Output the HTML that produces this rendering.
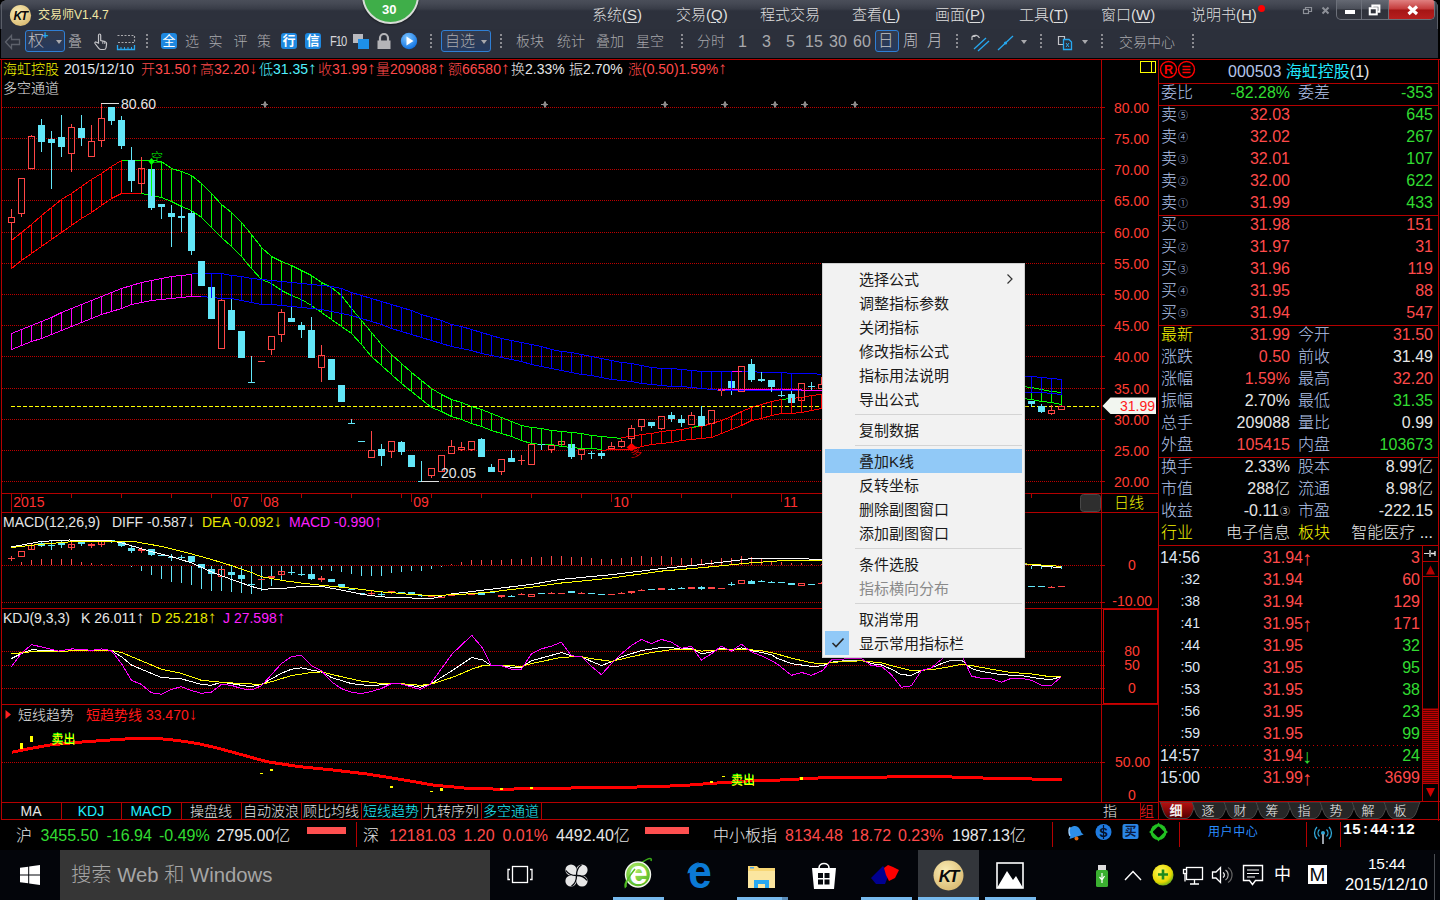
<!DOCTYPE html>
<html lang="zh"><head><meta charset="utf-8"><title>交易师V1.4.7</title>
<style>
*{box-sizing:border-box;margin:0;padding:0}
html,body{width:1440px;height:900px;overflow:hidden;background:#000}
body{position:relative;font-family:"Liberation Sans","Noto Sans CJK SC",sans-serif;font-size:15px;color:#c8c8c8;line-height:1}
.abs{position:absolute}
.t{position:absolute;white-space:nowrap;line-height:1}
.cj{font-weight:300}
#titlebar{position:absolute;left:0;top:0;width:1440px;height:29px;background:linear-gradient(#4a4e59 0,#444853 4px,#383c47 9px,#2d313c 11px,#2d313c 100%)}
#toolbar{position:absolute;left:0;top:29px;width:1440px;height:29px;background:#2c303b}
.menu-t{position:absolute;top:7px;font-size:15px;color:#dedede;white-space:nowrap;font-weight:300}
.menu-t u{text-decoration:underline;text-underline-offset:2px}
.tb{position:absolute;top:2.5px;height:19px;font-size:14px;line-height:19px;color:#a9a9ad;white-space:nowrap;font-weight:300}
.tbsq{position:absolute;top:4px;width:16px;height:16px;border-radius:3px;background:#1e88e0;color:#fff;font-size:13px;line-height:16px;text-align:center;font-weight:400}
.sepd{position:absolute;top:5px;width:2px;height:14px;background:repeating-linear-gradient(#8c8c92 0,#8c8c92 2px,transparent 2px,transparent 4px)}
.ar{font-size:17px;line-height:0}
.red{color:#ff4a4a}.grn{color:#32dc32}.cy{color:#50f0ff}.yl{color:#f8f800}.wh{color:#e6e6e6}.lb{color:#b4c6ec}.mg{color:#ff20ff}
</style></head>
<body>
<div id="titlebar">
<div class="abs" style="left:0;top:0;width:6px;height:6px;background:radial-gradient(circle at 6px 6px,transparent 5.5px,#000 6px)"></div>
<svg class="abs" style="left:9px;top:4px" width="23" height="23" viewBox="0 0 23 23"><defs><radialGradient id="kg" cx="40%" cy="35%" r="70%"><stop offset="0" stop-color="#fbeeb8"/><stop offset="1" stop-color="#d9b970"/></radialGradient></defs><circle cx="11.5" cy="11.5" r="10.6" fill="url(#kg)"/><text x="11" y="16" font-family="Liberation Sans,sans-serif" font-size="12" font-weight="bold" font-style="italic" fill="#0a0a0a" text-anchor="middle" letter-spacing="-1.5">KT</text></svg>
<div class="t cj" style="left:38px;top:9px;font-size:12px;color:#f1e7a4;font-weight:400">交易师V1.4.7</div>
<div class="abs" style="left:362px;top:-33px;width:57px;height:57px;border-radius:50%;background:#3fae49;border:2px solid #d8dcd8;box-shadow:0 1px 2px rgba(0,0,0,.5)"></div>
<div class="t" style="left:382px;top:3px;font-size:13px;font-weight:bold;color:#fff">30</div>
<div class="menu-t" style="left:592px">系统(<u>S</u>)</div>
<div class="menu-t" style="left:676px">交易(<u>Q</u>)</div>
<div class="menu-t" style="left:760px">程式交易</div>
<div class="menu-t" style="left:852px">查看(<u>L</u>)</div>
<div class="menu-t" style="left:935px">画面(<u>P</u>)</div>
<div class="menu-t" style="left:1019px">工具(<u>T</u>)</div>
<div class="menu-t" style="left:1101px">窗口(<u>W</u>)</div>
<div class="menu-t" style="left:1191px">说明书(<u>H</u>)</div>
<div class="abs" style="left:1258px;top:5px;width:7px;height:7px;border-radius:50%;background:#ff0000"></div>
<svg class="abs" style="left:1300px;top:4px" width="34" height="14" viewBox="0 0 34 14"><g fill="none" stroke="#8d9098" stroke-width="1.2"><rect x="3.5" y="5.5" width="5" height="4"/><path d="M5.5 5.5V3.5H11.5V7.5H8.5"/><path d="M22.5 3.5l6 6M28.5 3.5l-6 6" stroke-width="2"/></g></svg>
<div class="abs" style="left:1336px;top:0;width:99px;height:20px;border-radius:0 0 5px 5px;border:1px solid #6c707a;border-top:none;background:linear-gradient(#656973 0,#4b4f59 46%,#2e313a 52%,#32353e 100%);overflow:hidden"><div class="abs" style="left:24px;top:0;width:1px;height:20px;background:#6c707a"></div><div class="abs" style="left:51px;top:0;width:1px;height:20px;background:#6c707a"></div><div class="abs" style="left:52px;top:0;width:45px;height:20px;background:linear-gradient(#e08080 0,#c43a3a 45%,#a51515 50%,#b82020 100%)"></div><div class="abs" style="left:8px;top:10px;width:10px;height:4px;background:#fff"></div><svg class="abs" style="left:30px;top:3px" width="16" height="14" viewBox="0 0 18 16"><g fill="none" stroke="#fff" stroke-width="2.300"><rect x="3" y="6" width="8" height="7"/><path d="M6 5V3H14V10H12"/></g></svg><svg class="abs" style="left:68px;top:3px" width="16" height="14" viewBox="0 0 16 14"><path d="M3.500 3.500l8.500 7.500M12 3.500L3.500 11" stroke="#fff" stroke-width="3.200" fill="none"/></svg></div>
<div class="abs" style="left:1438px;top:0;width:2px;height:59px;background:#000;z-index:5"></div><div class="abs" style="left:1437px;top:3px;width:1px;height:27px;background:#5a5e68"></div><div class="abs" style="left:0;top:29px;width:1px;height:30px;background:#000;z-index:5"></div><div class="abs" style="left:1px;top:4px;width:1px;height:25px;background:#5a5e68"></div>
<div class="abs" style="left:1432px;top:0;width:6px;height:6px;background:radial-gradient(circle at 0 6px,transparent 5.5px,#000 6px)"></div>
</div>
<div id="toolbar">
<svg class="abs" style="left:3px;top:3px" width="18" height="20" viewBox="0 0 18 20"><path d="M2.5 10L8.5 3.5V7.5H16.5V12.5H8.5V16.5Z" fill="none" stroke="#5d616b" stroke-width="1.3"/></svg>
<div class="abs" style="left:25px;top:1px;width:40px;height:22px;border:1px solid #2f7fd6;border-radius:3px;background:linear-gradient(#333a4b,#243a60)"></div>
<div class="tb" style="left:28px;top:1.5px;font-size:16px;color:#bdbdc2">权</div>
<div class="t" style="left:42px;top:1px;font-size:11px;font-weight:bold;color:#27a8f0">+</div>
<div class="abs" style="left:56px;top:11px;border:3px solid transparent;border-top:4px solid #a9a9ad"></div>
<div class="tb" style="left:68px;top:3px;font-size:14px;color:#b9b9be">叠</div>
<svg class="abs" style="left:93px;top:3px" width="16" height="20" viewBox="0 0 16 20"><path d="M5.5 11V3.2c0-1.6 2.2-1.6 2.2 0V8.5l4.5 1.2c1 .3 1.5 1 1.4 2l-.5 3.8c-.2 1.2-1 2-2.2 2H8c-1 0-1.6-.4-2.2-1.200L2 11.500c-.6-1 .5-2 1.500-1.300Z" fill="none" stroke="#c4c4c8" stroke-width="1.2"/><path d="M9.800 9.300v2.500M11.800 9.800v2.200" stroke="#c4c4c8" stroke-width="1"/></svg>
<svg class="abs" style="left:116px;top:5px" width="20" height="18" viewBox="0 0 20 18"><path d="M1.500 1.500H18.500V8.500H1.500" fill="none" stroke="#a9a9ad" stroke-width="1.200" stroke-dasharray="2 1.500"/><path d="M1.500 11V15.500H18.500V11" fill="none" stroke="#27a8f0" stroke-width="1.300"/><path d="M5 13v2M8.500 13v2M12 13v2M15.500 13v2" stroke="#27a8f0" stroke-width="1"/></svg>
<div class="sepd" style="left:146px"></div>
<div class="tbsq" style="left:161px">全</div>
<div class="tb" style="left:185px">选</div>
<div class="tb" style="left:208.5px">实</div>
<div class="tb" style="left:233.5px">评</div>
<div class="tb" style="left:257px">策</div>
<div class="tbsq" style="left:281px;font-weight:700">行</div>
<div class="tbsq" style="left:305px;font-weight:700">信</div>
<div class="tb" style="left:329.5px;font-size:14px;letter-spacing:-1.3px;color:#d6d6da;transform:scaleX(.8);transform-origin:0 0;font-weight:400">F10</div>
<svg class="abs" style="left:352px;top:4px" width="18" height="17" viewBox="0 0 18 17"><rect x="1" y="1" width="10" height="9" fill="#b9b9be"/><rect x="6" y="6" width="11" height="10" fill="#1e90e8"/></svg>
<svg class="abs" style="left:376px;top:2.5px" width="16" height="18" viewBox="0 0 16 18"><path d="M4 9V6a4 4 0 0 1 8 0V9" fill="none" stroke="#b4b4b8" stroke-width="2.200"/><rect x="1.500" y="8.500" width="13" height="8.500" fill="#b4b4b8"/></svg>
<svg class="abs" style="left:400px;top:3px" width="18" height="18" viewBox="0 0 18 18"><defs><radialGradient id="pg" cx="40%" cy="30%" r="75%"><stop offset="0" stop-color="#7cc4ff"/><stop offset="1" stop-color="#0c6fe0"/></radialGradient></defs><circle cx="9" cy="9" r="8.200" fill="url(#pg)"/><path d="M6.500 4.500L13.500 9L6.500 13.500Z" fill="#fff"/></svg>
<div class="sepd" style="left:430px"></div>
<div class="abs" style="left:441px;top:1px;width:50px;height:22px;border:1px solid #2f7fd6;border-radius:3px;background:linear-gradient(#333a4b,#243a60)"></div>
<div class="tb" style="left:445px;top:2px;font-size:15px">自选</div>
<div class="abs" style="left:481px;top:11px;border:3px solid transparent;border-top:4px solid #a9a9ad"></div>
<div class="sepd" style="left:500px"></div>
<div class="tb" style="left:516px">板块</div>
<div class="tb" style="left:557px">统计</div>
<div class="tb" style="left:596px">叠加</div>
<div class="tb" style="left:636px">星空</div>
<div class="sepd" style="left:681px"></div>
<div class="tb" style="left:697px">分时</div>
<div class="tb" style="left:738px;font-size:16px">1</div>
<div class="tb" style="left:762px;font-size:16px">3</div>
<div class="tb" style="left:786px;font-size:16px">5</div>
<div class="tb" style="left:805px;font-size:16px">15</div>
<div class="tb" style="left:829px;font-size:16px">30</div>
<div class="tb" style="left:853px;font-size:16px">60</div>
<div class="abs" style="left:875px;top:1px;width:24px;height:22px;border:1px solid #2f7fd6;border-radius:3px;background:linear-gradient(#333a4b,#243a60)"></div>
<div class="tb" style="left:878px;top:2px;font-size:15.500px;color:#c4c4c8">日</div>
<div class="tb" style="left:903px;top:2px;font-size:15.500px;color:#c4c4c8">周</div>
<div class="tb" style="left:927px;top:2px;font-size:15.500px;color:#c4c4c8">月</div>
<div class="sepd" style="left:956px"></div>
<svg class="abs" style="left:969px;top:4px" width="24" height="20" viewBox="0 0 24 20"><path d="M3 3.500C6 1.500 9 2 10.500 5M3 3.500V7M3 3.500H6.500" fill="none" stroke="#c4c4c8" stroke-width="1.200"/><path d="M5 16L17 5" stroke="#27a8f0" stroke-width="1.300"/><path d="M9 18L20 8" stroke="#27a8f0" stroke-width="1.300"/></svg>
<svg class="abs" style="left:996px;top:5px" width="20" height="18" viewBox="0 0 20 18"><path d="M2 16L17 2" stroke="#27a8f0" stroke-width="1.300"/><circle cx="9.500" cy="9" r="1.600" fill="#27a8f0"/></svg>
<div class="abs" style="left:1021px;top:11px;border:3px solid transparent;border-top:4px solid #a9a9ad"></div>
<div class="sepd" style="left:1040px"></div>
<svg class="abs" style="left:1056px;top:5px" width="20" height="18" viewBox="0 0 20 18"><path d="M2.500 2.500H8.500V10.500H2.500Z" fill="none" stroke="#c4c4c8" stroke-width="1.200"/><path d="M7.500 5.500H13L15.500 8V15.500H7.500Z" fill="#2c303b" stroke="#27a8f0" stroke-width="1.300"/><path d="M10 9l3 4M13 9l-3 4" stroke="#27a8f0" stroke-width="1"/></svg>
<div class="abs" style="left:1082px;top:11px;border:3px solid transparent;border-top:4px solid #a9a9ad"></div>
<div class="sepd" style="left:1101px"></div>
<div class="tb" style="left:1119px;top:4px;font-size:14px">交易中心</div>
<div class="sepd" style="left:1192px"></div>
</div>
<svg class="abs" style="left:0;top:0" width="1160" height="822" viewBox="0 0 1160 822" shape-rendering="crispEdges" font-family="Liberation Sans, Noto Sans CJK SC, sans-serif" font-size="14">
<g fill="#b40000">
<rect x="0" y="59" width="1440" height="1"/>
<rect x="1" y="59" width="1" height="761"/>
<rect x="1101" y="59" width="1" height="744"/>
<rect x="1158" y="59" width="1" height="761"/>
<rect x="1" y="493" width="1158" height="1"/>
<rect x="1" y="512" width="1158" height="1"/>
<rect x="1" y="608" width="1158" height="1"/>
<rect x="1" y="704" width="1158" height="1"/>
<rect x="1" y="802" width="1158" height="1"/>
<rect x="1" y="819" width="1158" height="1"/>
</g>
<g stroke="#bc0000" stroke-width="1" stroke-dasharray="1 1">
<line x1="2" y1="107.5" x2="1101" y2="107.5"/>
<line x1="2" y1="138.5" x2="1101" y2="138.5"/>
<line x1="2" y1="169.5" x2="1101" y2="169.5"/>
<line x1="2" y1="200.5" x2="1101" y2="200.5"/>
<line x1="2" y1="232.5" x2="1101" y2="232.5"/>
<line x1="2" y1="263.5" x2="1101" y2="263.5"/>
<line x1="2" y1="294.5" x2="1101" y2="294.5"/>
<line x1="2" y1="325.5" x2="1101" y2="325.5"/>
<line x1="2" y1="356.5" x2="1101" y2="356.5"/>
<line x1="2" y1="388.5" x2="1101" y2="388.5"/>
<line x1="2" y1="419.5" x2="1101" y2="419.5"/>
<line x1="2" y1="450.5" x2="1101" y2="450.5"/>
<line x1="2" y1="481.5" x2="1101" y2="481.5"/>
</g>
<g fill="#b40000">
<rect x="1102" y="107" width="3" height="1"/>
<rect x="1102" y="138" width="3" height="1"/>
<rect x="1102" y="169" width="3" height="1"/>
<rect x="1102" y="200" width="3" height="1"/>
<rect x="1102" y="232" width="3" height="1"/>
<rect x="1102" y="263" width="3" height="1"/>
<rect x="1102" y="294" width="3" height="1"/>
<rect x="1102" y="325" width="3" height="1"/>
<rect x="1102" y="356" width="3" height="1"/>
<rect x="1102" y="388" width="3" height="1"/>
<rect x="1102" y="419" width="3" height="1"/>
<rect x="1102" y="450" width="3" height="1"/>
<rect x="1102" y="481" width="3" height="1"/>
</g>
<g fill="#ff3c32" text-anchor="end" shape-rendering="auto">
<text x="1149" y="112.5">80.00</text>
<text x="1149" y="143.5">75.00</text>
<text x="1149" y="174.5">70.00</text>
<text x="1149" y="205.5">65.00</text>
<text x="1149" y="237.5">60.00</text>
<text x="1149" y="268.5">55.00</text>
<text x="1149" y="299.5">50.00</text>
<text x="1149" y="330.5">45.00</text>
<text x="1149" y="361.5">40.00</text>
<text x="1149" y="393.5">35.00</text>
<text x="1149" y="424.5">30.00</text>
<text x="1149" y="455.5">25.00</text>
<text x="1149" y="486.5">20.00</text>
</g>
<g stroke-width="1">
<polyline points="11.5,240.5 21.5,232.5 31.5,224.5 41.5,215.5 51.5,207.5 61.5,199.5 71.5,193.5 81.5,186.5 91.5,179.5 101.5,173.5 111.5,166.5 121.5,160.5" fill="none" stroke="#ff0000"/><polyline points="11.5,268.5 21.5,260.5 31.5,253.5 41.5,246.5 51.5,239.5 61.5,232.5 71.5,225.5 81.5,218.5 91.5,212.5 101.5,205.5 111.5,198.5 121.5,193.5" fill="none" stroke="#ff0000"/>
<polyline points="121.5,193.5 141.5,193.5" fill="none" stroke="#ff0000"/><rect x="141" y="160" width="1" height="34" fill="#ff0000"/>
<polyline points="121.5,160.5 131.5,160.5 141.5,160.5 151.5,160.5 161.5,161.5 171.5,168.5 181.5,171.5 191.5,175.5 201.5,183.5 211.5,193.5 221.5,204.5 231.5,212.5 241.5,222.5 251.5,234.5 261.5,247.5 271.5,256.5 281.5,261.5 291.5,265.5 301.5,270.5 311.5,275.5 321.5,282.5 331.5,287.5 341.5,295.5 351.5,308.5 361.5,320.5 371.5,332.5 381.5,344.5 391.5,354.5 401.5,363.5 411.5,372.5 421.5,380.5 431.5,388.5 441.5,394.5 451.5,399.5 461.5,402.5 471.5,406.5 481.5,409.5 491.5,413.5 501.5,417.5 511.5,421.5 521.5,425.5 531.5,427.5 541.5,428.5 551.5,430.5 561.5,431.5 571.5,432.5 581.5,433.5 591.5,435.5 601.5,436.5 611.5,437.5 621.5,438.5" fill="none" stroke="#00ff00"/><polyline points="141.5,193.5 151.5,195.5 161.5,197.5 171.5,201.5 181.5,206.5 191.5,210.5 201.5,217.5 211.5,227.5 221.5,237.5 231.5,246.5 241.5,256.5 251.5,268.5 261.5,279.5 271.5,283.5 281.5,290.5 291.5,295.5 301.5,299.5 311.5,305.5 321.5,312.5 331.5,319.5 341.5,326.5 351.5,333.5 361.5,344.5 371.5,356.5 381.5,365.5 391.5,374.5 401.5,383.5 411.5,391.5 421.5,399.5 431.5,407.5 441.5,411.5 451.5,416.5 461.5,419.5 471.5,423.5 481.5,426.5 491.5,430.5 501.5,433.5 511.5,436.5 521.5,440.5 531.5,443.5 541.5,444.5 551.5,444.5 561.5,446.5 571.5,447.5 581.5,448.5 591.5,448.5 601.5,449.5" fill="none" stroke="#00ff00"/>
<polyline points="1021.5,386.5 1031.5,387.5 1041.5,389.5 1051.5,391.5 1061.5,392.5" fill="none" stroke="#00ff00"/><polyline points="1021.5,398.5 1031.5,399.5 1041.5,401.5 1051.5,402.5 1061.5,404.5" fill="none" stroke="#00ff00"/>
<polyline points="11.5,333.5 21.5,329.5 31.5,325.5 41.5,321.5 51.5,317.5 61.5,312.5 71.5,308.5 81.5,304.5 91.5,300.5 101.5,296.5 111.5,292.5 121.5,288.5 131.5,285.5 141.5,282.5 151.5,280.5 161.5,278.5 171.5,276.5 181.5,275.5 191.5,274.5" fill="none" stroke="#ff00ff"/><polyline points="11.5,349.5 21.5,345.5 31.5,341.5 41.5,338.5 51.5,334.5 61.5,330.5 71.5,326.5 81.5,322.5 91.5,318.5 101.5,314.5 111.5,311.5 121.5,308.5 131.5,304.5 141.5,302.5 151.5,300.5 161.5,299.5 171.5,298.5 181.5,297.5 191.5,296.5" fill="none" stroke="#ff00ff"/>
<polyline points="191.5,296.5 201.5,296.5" fill="none" stroke="#ff00ff"/>
<polyline points="191.5,273.5 201.5,273.5 211.5,273.5 221.5,273.5 231.5,275.5 241.5,276.5 251.5,278.5 261.5,279.5 271.5,280.5 281.5,281.5 291.5,282.5 301.5,283.5 311.5,284.5 321.5,285.5 331.5,286.5 341.5,288.5 351.5,292.5 361.5,295.5 371.5,298.5 381.5,301.5 391.5,304.5 401.5,307.5 411.5,310.5 421.5,314.5 431.5,317.5 441.5,320.5 451.5,324.5 461.5,326.5 471.5,329.5 481.5,332.5 491.5,335.5 501.5,338.5 511.5,340.5 521.5,342.5 531.5,344.5 541.5,346.5 551.5,349.5 561.5,351.5 571.5,352.5 581.5,354.5 591.5,356.5 601.5,358.5 611.5,360.5 621.5,362.5 631.5,363.5 641.5,365.5 651.5,367.5 661.5,368.5 671.5,368.5 681.5,369.5 691.5,370.5 701.5,371.5 711.5,371.5 721.5,371.5 731.5,371.5 741.5,371.5 751.5,371.5 761.5,372.5 771.5,372.5 781.5,372.5 791.5,373.5 801.5,373.5 811.5,373.5 821.5,374.5" fill="none" stroke="#0000ff"/><polyline points="201.5,296.5 211.5,297.5 221.5,298.5 231.5,298.5 241.5,300.5 251.5,302.5 261.5,304.5 271.5,304.5 281.5,305.5 291.5,306.5 301.5,307.5 311.5,308.5 321.5,309.5 331.5,311.5 341.5,313.5 351.5,315.5 361.5,318.5 371.5,321.5 381.5,324.5 391.5,328.5 401.5,331.5 411.5,334.5 421.5,337.5 431.5,340.5 441.5,343.5 451.5,346.5 461.5,348.5 471.5,350.5 481.5,353.5 491.5,355.5 501.5,357.5 511.5,359.5 521.5,361.5 531.5,364.5 541.5,366.5 551.5,368.5 561.5,370.5 571.5,372.5 581.5,374.5 591.5,375.5 601.5,377.5 611.5,379.5 621.5,380.5 631.5,381.5 641.5,383.5 651.5,384.5 661.5,385.5 671.5,386.5 681.5,386.5 691.5,387.5 701.5,388.5 711.5,389.5 721.5,390.5 731.5,390.5 741.5,390.5 751.5,390.5 761.5,390.5 771.5,390.5 781.5,390.5 791.5,390.5 801.5,390.5 811.5,390.5 821.5,390.5" fill="none" stroke="#0000ff"/>
<polyline points="1021.5,376.5 1031.5,376.5 1041.5,377.5 1051.5,378.5 1061.5,379.5" fill="none" stroke="#0000ff"/><polyline points="1021.5,392.5 1031.5,392.5 1041.5,392.5 1051.5,393.5 1061.5,394.5" fill="none" stroke="#0000ff"/>
<polyline points="621.5,437.5 631.5,436.5 641.5,434.5 651.5,433.5 661.5,431.5 671.5,430.5 681.5,429.5 691.5,427.5 701.5,426.5 711.5,423.5 721.5,420.5 731.5,416.5 741.5,411.5 751.5,407.5 761.5,404.5 771.5,401.5 781.5,399.5 791.5,398.5 801.5,397.5 811.5,395.5 821.5,394.5" fill="none" stroke="#ff0000"/><polyline points="601.5,450.5 611.5,449.5 621.5,449.5 631.5,449.5 641.5,446.5 651.5,444.5 661.5,443.5 671.5,442.5 681.5,440.5 691.5,439.5 701.5,438.5 711.5,437.5 721.5,433.5 731.5,429.5 741.5,425.5 751.5,420.5 761.5,418.5 771.5,415.5 781.5,413.5 791.5,413.5 801.5,412.5 811.5,410.5 821.5,408.5" fill="none" stroke="#ff0000"/>
<polyline points="731.5,371.5 741.5,371.5" fill="none" stroke="#ff00ff"/><polyline points="718,389.5 801.5,389.5 802,390.5 822,390.5" fill="none" stroke="#ff00ff"/><rect x="744" y="372" width="1" height="18" fill="#ff00ff"/>
<polyline points="691.5,427.5 701.5,425.500" fill="none" stroke="#00ff00"/><polyline points="781.5,399.5 791.5,398.500" fill="none" stroke="#00ff00"/>
</g>
<line x1="11" y1="406.5" x2="1099" y2="406.5" stroke="#ffff00" stroke-width="1" stroke-dasharray="4 2"/>
<g>
<rect x="8.5" y="217.5" width="6" height="5" fill="none" stroke="#ff4646" stroke-width="1"/><rect x="11" y="209" width="1" height="8" fill="#ff4646"/><rect x="11" y="223" width="1" height="17" fill="#ff4646"/>
<rect x="18.5" y="178.5" width="6" height="35" fill="none" stroke="#ff4646" stroke-width="1"/><rect x="21" y="214" width="1" height="3" fill="#ff4646"/>
<rect x="28.5" y="136.5" width="6" height="32" fill="none" stroke="#ff4646" stroke-width="1"/><rect x="31" y="135" width="1" height="1" fill="#ff4646"/>
<rect x="38" y="125" width="7" height="17" fill="#62e6f8"/><rect x="41" y="119" width="1" height="6" fill="#62e6f8"/><rect x="41" y="142" width="1" height="10" fill="#62e6f8"/>
<rect x="48" y="139" width="7" height="4" fill="#62e6f8"/><rect x="51" y="131" width="1" height="8" fill="#62e6f8"/><rect x="51" y="143" width="1" height="46" fill="#62e6f8"/>
<rect x="58" y="137" width="7" height="10" fill="#62e6f8"/><rect x="61" y="115" width="1" height="22" fill="#62e6f8"/><rect x="61" y="147" width="1" height="10" fill="#62e6f8"/>
<rect x="68.5" y="127.5" width="6" height="26" fill="none" stroke="#ff4646" stroke-width="1"/><rect x="71" y="124" width="1" height="3" fill="#ff4646"/><rect x="71" y="154" width="1" height="18" fill="#ff4646"/>
<rect x="78" y="128" width="7" height="10" fill="#62e6f8"/><rect x="81" y="115" width="1" height="13" fill="#62e6f8"/><rect x="81" y="138" width="1" height="8" fill="#62e6f8"/>
<rect x="88.5" y="141.5" width="6" height="15" fill="none" stroke="#ff4646" stroke-width="1"/><rect x="91" y="125" width="1" height="16" fill="#ff4646"/>
<rect x="98.5" y="118.5" width="6" height="22" fill="none" stroke="#ff4646" stroke-width="1"/><rect x="101" y="103" width="1" height="15" fill="#ff4646"/><rect x="101" y="141" width="1" height="6" fill="#ff4646"/>
<rect x="108" y="107" width="7" height="14" fill="#62e6f8"/><rect x="111" y="121" width="1" height="4" fill="#62e6f8"/>
<rect x="118" y="120" width="7" height="26" fill="#62e6f8"/><rect x="121" y="116" width="1" height="4" fill="#62e6f8"/><rect x="121" y="146" width="1" height="3" fill="#62e6f8"/>
<rect x="128" y="160" width="7" height="21" fill="#62e6f8"/><rect x="131" y="147" width="1" height="13" fill="#62e6f8"/><rect x="131" y="181" width="1" height="11" fill="#62e6f8"/>
<rect x="138.5" y="168.5" width="6" height="15" fill="none" stroke="#ff4646" stroke-width="1"/><rect x="141" y="157" width="1" height="11" fill="#ff4646"/><rect x="141" y="184" width="1" height="9" fill="#ff4646"/>
<rect x="148" y="169" width="7" height="39" fill="#62e6f8"/><rect x="151" y="165" width="1" height="4" fill="#62e6f8"/><rect x="151" y="208" width="1" height="2" fill="#62e6f8"/>
<rect x="158" y="204" width="7" height="3" fill="#62e6f8"/><rect x="161" y="207" width="1" height="12" fill="#62e6f8"/>
<rect x="168" y="213" width="7" height="4" fill="#62e6f8"/><rect x="171" y="205" width="1" height="8" fill="#62e6f8"/><rect x="171" y="217" width="1" height="30" fill="#62e6f8"/>
<rect x="178" y="216" width="7" height="2" fill="#62e6f8"/><rect x="181" y="205" width="1" height="11" fill="#62e6f8"/><rect x="181" y="218" width="1" height="14" fill="#62e6f8"/>
<rect x="188" y="213" width="7" height="38" fill="#62e6f8"/><rect x="191" y="211" width="1" height="2" fill="#62e6f8"/><rect x="191" y="251" width="1" height="4" fill="#62e6f8"/>
<rect x="198" y="261" width="7" height="25" fill="#62e6f8"/>
<rect x="208" y="287" width="7" height="32" fill="#62e6f8"/>
<rect x="218.5" y="300.5" width="6" height="48" fill="none" stroke="#ff4646" stroke-width="1"/><rect x="221" y="297" width="1" height="3" fill="#ff4646"/>
<rect x="228" y="310" width="7" height="20" fill="#62e6f8"/><rect x="231" y="298" width="1" height="12" fill="#62e6f8"/>
<rect x="238" y="331" width="7" height="27" fill="#62e6f8"/>
<rect x="248" y="382" width="7" height="1" fill="#62e6f8"/><rect x="251" y="356" width="1" height="27" fill="#62e6f8"/>
<rect x="258" y="361" width="7" height="1" fill="#ff4646"/>
<rect x="268.5" y="336.5" width="6" height="13" fill="none" stroke="#ff4646" stroke-width="1"/><rect x="271" y="350" width="1" height="5" fill="#ff4646"/>
<rect x="278.5" y="312.5" width="6" height="22" fill="none" stroke="#ff4646" stroke-width="1"/><rect x="281" y="309" width="1" height="3" fill="#ff4646"/><rect x="281" y="335" width="1" height="7" fill="#ff4646"/>
<rect x="288" y="318" width="7" height="4" fill="#62e6f8"/><rect x="291" y="305" width="1" height="13" fill="#62e6f8"/>
<rect x="298" y="325" width="7" height="5" fill="#62e6f8"/><rect x="301" y="322" width="1" height="3" fill="#62e6f8"/><rect x="301" y="330" width="1" height="8" fill="#62e6f8"/>
<rect x="308" y="330" width="7" height="28" fill="#62e6f8"/><rect x="311" y="317" width="1" height="13" fill="#62e6f8"/>
<rect x="318.5" y="355.5" width="6" height="12" fill="none" stroke="#ff4646" stroke-width="1"/><rect x="321" y="345" width="1" height="10" fill="#ff4646"/><rect x="321" y="368" width="1" height="14" fill="#ff4646"/>
<rect x="328" y="359" width="7" height="21" fill="#62e6f8"/>
<rect x="338" y="385" width="7" height="17" fill="#62e6f8"/>
<rect x="348" y="423" width="7" height="1" fill="#62e6f8"/><rect x="351" y="419" width="1" height="5" fill="#62e6f8"/>
<rect x="358" y="441" width="7" height="1" fill="#62e6f8"/>
<rect x="368.5" y="450.5" width="6" height="7" fill="none" stroke="#ff4646" stroke-width="1"/><rect x="371" y="431" width="1" height="19" fill="#ff4646"/>
<rect x="378" y="449" width="7" height="7" fill="#62e6f8"/><rect x="381" y="444" width="1" height="5" fill="#62e6f8"/><rect x="381" y="456" width="1" height="10" fill="#62e6f8"/>
<rect x="388.5" y="441.5" width="6" height="10" fill="none" stroke="#ff4646" stroke-width="1"/><rect x="391" y="452" width="1" height="6" fill="#ff4646"/>
<rect x="398" y="442" width="7" height="10" fill="#62e6f8"/><rect x="401" y="441" width="1" height="1" fill="#62e6f8"/><rect x="401" y="452" width="1" height="3" fill="#62e6f8"/>
<rect x="408" y="455" width="7" height="12" fill="#62e6f8"/>
<rect x="418" y="481" width="7" height="1" fill="#62e6f8"/><rect x="421" y="461" width="1" height="21" fill="#62e6f8"/>
<rect x="428.5" y="468.5" width="6" height="7" fill="none" stroke="#ff4646" stroke-width="1"/><rect x="431" y="476" width="1" height="2" fill="#ff4646"/>
<rect x="438.5" y="455.5" width="6" height="16" fill="none" stroke="#ff4646" stroke-width="1"/>
<rect x="448.5" y="446.5" width="6" height="7" fill="none" stroke="#ff4646" stroke-width="1"/><rect x="451" y="440" width="1" height="6" fill="#ff4646"/>
<rect x="458.5" y="447.5" width="6" height="2" fill="none" stroke="#ff4646" stroke-width="1"/><rect x="461" y="442" width="1" height="5" fill="#ff4646"/><rect x="461" y="450" width="1" height="1" fill="#ff4646"/>
<rect x="468.5" y="441.5" width="6" height="8" fill="none" stroke="#ff4646" stroke-width="1"/><rect x="471" y="450" width="1" height="1" fill="#ff4646"/>
<rect x="478" y="439" width="7" height="18" fill="#62e6f8"/><rect x="481" y="438" width="1" height="1" fill="#62e6f8"/>
<rect x="488" y="467" width="7" height="5" fill="#62e6f8"/><rect x="491" y="464" width="1" height="3" fill="#62e6f8"/>
<rect x="498.5" y="459.5" width="6" height="12" fill="none" stroke="#ff4646" stroke-width="1"/><rect x="501" y="472" width="1" height="3" fill="#ff4646"/>
<rect x="508" y="458" width="7" height="4" fill="#62e6f8"/><rect x="511" y="450" width="1" height="8" fill="#62e6f8"/>
<rect x="518" y="460" width="7" height="1" fill="#ff4646"/><rect x="521" y="455" width="1" height="10" fill="#ff4646"/>
<rect x="528.5" y="444.5" width="6" height="20" fill="none" stroke="#ff4646" stroke-width="1"/>
<rect x="538" y="444" width="7" height="1" fill="#62e6f8"/><rect x="541" y="444" width="1" height="6" fill="#62e6f8"/>
<rect x="548.5" y="445.5" width="6" height="4" fill="none" stroke="#ff4646" stroke-width="1"/><rect x="551" y="443" width="1" height="2" fill="#ff4646"/><rect x="551" y="450" width="1" height="3" fill="#ff4646"/>
<rect x="558.5" y="441.5" width="6" height="3" fill="none" stroke="#ff4646" stroke-width="1"/><rect x="561" y="438" width="1" height="3" fill="#ff4646"/><rect x="561" y="445" width="1" height="1" fill="#ff4646"/>
<rect x="568" y="444" width="7" height="13" fill="#62e6f8"/><rect x="571" y="457" width="1" height="2" fill="#62e6f8"/>
<rect x="578.5" y="449.5" width="6" height="5" fill="none" stroke="#ff4646" stroke-width="1"/><rect x="581" y="447" width="1" height="2" fill="#ff4646"/><rect x="581" y="455" width="1" height="5" fill="#ff4646"/>
<rect x="588" y="453" width="7" height="1" fill="#62e6f8"/><rect x="591" y="451" width="1" height="8" fill="#62e6f8"/>
<rect x="598" y="453" width="7" height="3" fill="#62e6f8"/><rect x="601" y="451" width="1" height="2" fill="#62e6f8"/><rect x="601" y="456" width="1" height="3" fill="#62e6f8"/>
<rect x="608.5" y="446.5" width="6" height="2" fill="none" stroke="#ff4646" stroke-width="1"/><rect x="611" y="442" width="1" height="4" fill="#ff4646"/>
<rect x="618.5" y="441.5" width="6" height="5" fill="none" stroke="#ff4646" stroke-width="1"/><rect x="621" y="439" width="1" height="2" fill="#ff4646"/><rect x="621" y="447" width="1" height="1" fill="#ff4646"/>
<rect x="628.5" y="428.5" width="6" height="10" fill="none" stroke="#ff4646" stroke-width="1"/><rect x="631" y="425" width="1" height="3" fill="#ff4646"/><rect x="631" y="439" width="1" height="6" fill="#ff4646"/>
<rect x="638.5" y="419.5" width="6" height="7" fill="none" stroke="#ff4646" stroke-width="1"/><rect x="641" y="427" width="1" height="4" fill="#ff4646"/>
<rect x="648" y="422" width="7" height="4" fill="#62e6f8"/><rect x="651" y="426" width="1" height="2" fill="#62e6f8"/>
<rect x="658.5" y="416.5" width="6" height="12" fill="none" stroke="#ff4646" stroke-width="1"/><rect x="661" y="429" width="1" height="1" fill="#ff4646"/>
<rect x="668" y="415" width="7" height="4" fill="#62e6f8"/><rect x="671" y="412" width="1" height="3" fill="#62e6f8"/><rect x="671" y="419" width="1" height="3" fill="#62e6f8"/>
<rect x="678" y="419" width="7" height="4" fill="#62e6f8"/><rect x="681" y="415" width="1" height="4" fill="#62e6f8"/><rect x="681" y="423" width="1" height="4" fill="#62e6f8"/>
<rect x="688.5" y="415.5" width="6" height="9" fill="none" stroke="#ff4646" stroke-width="1"/><rect x="691" y="412" width="1" height="3" fill="#ff4646"/>
<rect x="698" y="416" width="7" height="10" fill="#62e6f8"/><rect x="701" y="406" width="1" height="10" fill="#62e6f8"/><rect x="701" y="426" width="1" height="4" fill="#62e6f8"/>
<rect x="708.5" y="410.5" width="6" height="13" fill="none" stroke="#ff4646" stroke-width="1"/>
<rect x="718" y="390" width="7" height="1" fill="#ff4646"/><rect x="721" y="390" width="1" height="6" fill="#ff4646"/>
<rect x="728" y="381" width="7" height="7" fill="#62e6f8"/><rect x="731" y="371" width="1" height="10" fill="#62e6f8"/><rect x="731" y="388" width="1" height="7" fill="#62e6f8"/>
<rect x="738.5" y="366.5" width="6" height="25" fill="none" stroke="#ff4646" stroke-width="1"/>
<rect x="748" y="364" width="7" height="16" fill="#62e6f8"/><rect x="751" y="359" width="1" height="5" fill="#62e6f8"/><rect x="751" y="380" width="1" height="2" fill="#62e6f8"/>
<rect x="758" y="379" width="7" height="2" fill="#62e6f8"/><rect x="761" y="372" width="1" height="7" fill="#62e6f8"/><rect x="761" y="381" width="1" height="1" fill="#62e6f8"/>
<rect x="768" y="380" width="7" height="7" fill="#62e6f8"/><rect x="771" y="387" width="1" height="5" fill="#62e6f8"/>
<rect x="778" y="395" width="7" height="1" fill="#62e6f8"/><rect x="781" y="389" width="1" height="8" fill="#62e6f8"/>
<rect x="788" y="394" width="7" height="9" fill="#62e6f8"/><rect x="791" y="391" width="1" height="3" fill="#62e6f8"/><rect x="791" y="403" width="1" height="3" fill="#62e6f8"/>
<rect x="798.5" y="383.5" width="6" height="17" fill="none" stroke="#ff4646" stroke-width="1"/>
<rect x="808" y="386" width="7" height="1" fill="#62e6f8"/><rect x="811" y="382" width="1" height="8" fill="#62e6f8"/>
<rect x="818.5" y="384.5" width="6" height="4" fill="none" stroke="#ff4646" stroke-width="1"/><rect x="821" y="377" width="1" height="7" fill="#ff4646"/>
<rect x="1028" y="401" width="7" height="3" fill="#62e6f8"/><rect x="1031" y="404" width="1" height="3" fill="#62e6f8"/>
<rect x="1038" y="406" width="7" height="6" fill="#62e6f8"/><rect x="1041" y="404" width="1" height="2" fill="#62e6f8"/><rect x="1041" y="412" width="1" height="1" fill="#62e6f8"/>
<rect x="1048.5" y="410.5" width="6" height="3" fill="none" stroke="#ff4646" stroke-width="1"/><rect x="1051" y="405" width="1" height="5" fill="#ff4646"/><rect x="1051" y="414" width="1" height="1" fill="#ff4646"/>
<rect x="1058.5" y="406.5" width="6" height="3" fill="none" stroke="#ff4646" stroke-width="1"/><rect x="1061" y="405" width="1" height="1" fill="#ff4646"/>
</g>
<g><rect x="11" y="240" width="1" height="29" fill="#ff0000"/><rect x="21" y="232" width="1" height="29" fill="#ff0000"/><rect x="31" y="224" width="1" height="30" fill="#ff0000"/><rect x="41" y="215" width="1" height="32" fill="#ff0000"/><rect x="51" y="207" width="1" height="33" fill="#ff0000"/><rect x="61" y="199" width="1" height="34" fill="#ff0000"/><rect x="71" y="193" width="1" height="33" fill="#ff0000"/><rect x="81" y="186" width="1" height="33" fill="#ff0000"/><rect x="91" y="179" width="1" height="34" fill="#ff0000"/><rect x="101" y="173" width="1" height="33" fill="#ff0000"/><rect x="111" y="166" width="1" height="33" fill="#ff0000"/><rect x="121" y="160" width="1" height="34" fill="#ff0000"/><rect x="151" y="160" width="1" height="36" fill="#00ff00"/><rect x="161" y="161" width="1" height="37" fill="#00ff00"/><rect x="171" y="168" width="1" height="34" fill="#00ff00"/><rect x="181" y="171" width="1" height="36" fill="#00ff00"/><rect x="191" y="175" width="1" height="36" fill="#00ff00"/><rect x="201" y="183" width="1" height="35" fill="#00ff00"/><rect x="211" y="193" width="1" height="35" fill="#00ff00"/><rect x="221" y="204" width="1" height="34" fill="#00ff00"/><rect x="231" y="212" width="1" height="35" fill="#00ff00"/><rect x="241" y="222" width="1" height="35" fill="#00ff00"/><rect x="251" y="234" width="1" height="35" fill="#00ff00"/><rect x="261" y="247" width="1" height="33" fill="#00ff00"/><rect x="271" y="256" width="1" height="28" fill="#00ff00"/><rect x="281" y="261" width="1" height="30" fill="#00ff00"/><rect x="291" y="265" width="1" height="31" fill="#00ff00"/><rect x="301" y="270" width="1" height="30" fill="#00ff00"/><rect x="311" y="275" width="1" height="31" fill="#00ff00"/><rect x="321" y="282" width="1" height="31" fill="#00ff00"/><rect x="331" y="287" width="1" height="33" fill="#00ff00"/><rect x="341" y="295" width="1" height="32" fill="#00ff00"/><rect x="351" y="308" width="1" height="26" fill="#00ff00"/><rect x="361" y="320" width="1" height="25" fill="#00ff00"/><rect x="371" y="332" width="1" height="25" fill="#00ff00"/><rect x="381" y="344" width="1" height="22" fill="#00ff00"/><rect x="391" y="354" width="1" height="21" fill="#00ff00"/><rect x="401" y="363" width="1" height="21" fill="#00ff00"/><rect x="411" y="372" width="1" height="20" fill="#00ff00"/><rect x="421" y="380" width="1" height="20" fill="#00ff00"/><rect x="431" y="388" width="1" height="20" fill="#00ff00"/><rect x="441" y="394" width="1" height="18" fill="#00ff00"/><rect x="451" y="399" width="1" height="18" fill="#00ff00"/><rect x="461" y="402" width="1" height="18" fill="#00ff00"/><rect x="471" y="406" width="1" height="18" fill="#00ff00"/><rect x="481" y="409" width="1" height="18" fill="#00ff00"/><rect x="491" y="413" width="1" height="18" fill="#00ff00"/><rect x="501" y="417" width="1" height="17" fill="#00ff00"/><rect x="511" y="421" width="1" height="16" fill="#00ff00"/><rect x="521" y="425" width="1" height="16" fill="#00ff00"/><rect x="531" y="427" width="1" height="17" fill="#00ff00"/><rect x="541" y="428" width="1" height="17" fill="#00ff00"/><rect x="551" y="430" width="1" height="15" fill="#00ff00"/><rect x="561" y="431" width="1" height="16" fill="#00ff00"/><rect x="571" y="432" width="1" height="16" fill="#00ff00"/><rect x="581" y="433" width="1" height="16" fill="#00ff00"/><rect x="591" y="435" width="1" height="14" fill="#00ff00"/><rect x="601" y="436" width="1" height="14" fill="#00ff00"/><rect x="1021" y="386" width="1" height="13" fill="#00ff00"/><rect x="1031" y="387" width="1" height="13" fill="#00ff00"/><rect x="1041" y="389" width="1" height="13" fill="#00ff00"/><rect x="1051" y="391" width="1" height="12" fill="#00ff00"/><rect x="1061" y="392" width="1" height="13" fill="#00ff00"/><rect x="11" y="333" width="1" height="17" fill="#ff00ff"/><rect x="21" y="329" width="1" height="17" fill="#ff00ff"/><rect x="31" y="325" width="1" height="17" fill="#ff00ff"/><rect x="41" y="321" width="1" height="18" fill="#ff00ff"/><rect x="51" y="317" width="1" height="18" fill="#ff00ff"/><rect x="61" y="312" width="1" height="19" fill="#ff00ff"/><rect x="71" y="308" width="1" height="19" fill="#ff00ff"/><rect x="81" y="304" width="1" height="19" fill="#ff00ff"/><rect x="91" y="300" width="1" height="19" fill="#ff00ff"/><rect x="101" y="296" width="1" height="19" fill="#ff00ff"/><rect x="111" y="292" width="1" height="20" fill="#ff00ff"/><rect x="121" y="288" width="1" height="21" fill="#ff00ff"/><rect x="131" y="285" width="1" height="20" fill="#ff00ff"/><rect x="141" y="282" width="1" height="21" fill="#ff00ff"/><rect x="151" y="280" width="1" height="21" fill="#ff00ff"/><rect x="161" y="278" width="1" height="22" fill="#ff00ff"/><rect x="171" y="276" width="1" height="23" fill="#ff00ff"/><rect x="181" y="275" width="1" height="23" fill="#ff00ff"/><rect x="191" y="274" width="1" height="23" fill="#ff00ff"/><rect x="211" y="273" width="1" height="25" fill="#0000ff"/><rect x="221" y="273" width="1" height="26" fill="#0000ff"/><rect x="231" y="275" width="1" height="24" fill="#0000ff"/><rect x="241" y="276" width="1" height="25" fill="#0000ff"/><rect x="251" y="278" width="1" height="25" fill="#0000ff"/><rect x="261" y="279" width="1" height="26" fill="#0000ff"/><rect x="271" y="280" width="1" height="25" fill="#0000ff"/><rect x="281" y="281" width="1" height="25" fill="#0000ff"/><rect x="291" y="282" width="1" height="25" fill="#0000ff"/><rect x="301" y="283" width="1" height="25" fill="#0000ff"/><rect x="311" y="284" width="1" height="25" fill="#0000ff"/><rect x="321" y="285" width="1" height="25" fill="#0000ff"/><rect x="331" y="286" width="1" height="26" fill="#0000ff"/><rect x="341" y="288" width="1" height="26" fill="#0000ff"/><rect x="351" y="292" width="1" height="24" fill="#0000ff"/><rect x="361" y="295" width="1" height="24" fill="#0000ff"/><rect x="371" y="298" width="1" height="24" fill="#0000ff"/><rect x="381" y="301" width="1" height="24" fill="#0000ff"/><rect x="391" y="304" width="1" height="25" fill="#0000ff"/><rect x="401" y="307" width="1" height="25" fill="#0000ff"/><rect x="411" y="310" width="1" height="25" fill="#0000ff"/><rect x="421" y="314" width="1" height="24" fill="#0000ff"/><rect x="431" y="317" width="1" height="24" fill="#0000ff"/><rect x="441" y="320" width="1" height="24" fill="#0000ff"/><rect x="451" y="324" width="1" height="23" fill="#0000ff"/><rect x="461" y="326" width="1" height="23" fill="#0000ff"/><rect x="471" y="329" width="1" height="22" fill="#0000ff"/><rect x="481" y="332" width="1" height="22" fill="#0000ff"/><rect x="491" y="335" width="1" height="21" fill="#0000ff"/><rect x="501" y="338" width="1" height="20" fill="#0000ff"/><rect x="511" y="340" width="1" height="20" fill="#0000ff"/><rect x="521" y="342" width="1" height="20" fill="#0000ff"/><rect x="531" y="344" width="1" height="21" fill="#0000ff"/><rect x="541" y="346" width="1" height="21" fill="#0000ff"/><rect x="551" y="349" width="1" height="20" fill="#0000ff"/><rect x="561" y="351" width="1" height="20" fill="#0000ff"/><rect x="571" y="352" width="1" height="21" fill="#0000ff"/><rect x="581" y="354" width="1" height="21" fill="#0000ff"/><rect x="591" y="356" width="1" height="20" fill="#0000ff"/><rect x="601" y="358" width="1" height="20" fill="#0000ff"/><rect x="611" y="360" width="1" height="20" fill="#0000ff"/><rect x="621" y="362" width="1" height="19" fill="#0000ff"/><rect x="631" y="363" width="1" height="19" fill="#0000ff"/><rect x="641" y="365" width="1" height="19" fill="#0000ff"/><rect x="651" y="367" width="1" height="18" fill="#0000ff"/><rect x="661" y="368" width="1" height="18" fill="#0000ff"/><rect x="671" y="368" width="1" height="19" fill="#0000ff"/><rect x="681" y="369" width="1" height="18" fill="#0000ff"/><rect x="691" y="370" width="1" height="18" fill="#0000ff"/><rect x="701" y="371" width="1" height="18" fill="#0000ff"/><rect x="711" y="371" width="1" height="19" fill="#0000ff"/><rect x="721" y="371" width="1" height="20" fill="#0000ff"/><rect x="731" y="371" width="1" height="20" fill="#0000ff"/><rect x="781" y="372" width="1" height="19" fill="#0000ff"/><rect x="791" y="373" width="1" height="18" fill="#0000ff"/><rect x="1021" y="376" width="1" height="17" fill="#0000ff"/><rect x="1031" y="376" width="1" height="17" fill="#0000ff"/><rect x="1041" y="377" width="1" height="16" fill="#0000ff"/><rect x="1051" y="378" width="1" height="16" fill="#0000ff"/><rect x="1061" y="379" width="1" height="16" fill="#0000ff"/><rect x="641" y="434" width="1" height="13" fill="#ff0000"/><rect x="651" y="433" width="1" height="12" fill="#ff0000"/><rect x="661" y="431" width="1" height="13" fill="#ff0000"/><rect x="671" y="430" width="1" height="13" fill="#ff0000"/><rect x="681" y="429" width="1" height="12" fill="#ff0000"/><rect x="691" y="427" width="1" height="13" fill="#ff0000"/><rect x="701" y="426" width="1" height="13" fill="#ff0000"/><rect x="711" y="423" width="1" height="15" fill="#ff0000"/><rect x="721" y="420" width="1" height="14" fill="#ff0000"/><rect x="731" y="416" width="1" height="14" fill="#ff0000"/><rect x="741" y="411" width="1" height="15" fill="#ff0000"/><rect x="751" y="407" width="1" height="14" fill="#ff0000"/><rect x="761" y="404" width="1" height="15" fill="#ff0000"/><rect x="771" y="401" width="1" height="15" fill="#ff0000"/><rect x="781" y="399" width="1" height="15" fill="#ff0000"/><rect x="791" y="398" width="1" height="16" fill="#ff0000"/><rect x="801" y="397" width="1" height="16" fill="#ff0000"/><rect x="811" y="395" width="1" height="16" fill="#ff0000"/><rect x="821" y="394" width="1" height="15" fill="#ff0000"/></g>
<rect x="101" y="103" width="18" height="1" fill="#e0e0e0"/>
<text x="121" y="109" fill="#e6e6e6" shape-rendering="auto">80.60</text>
<rect x="421" y="481" width="18" height="1" fill="#e0e0e0"/>
<text x="441" y="478" fill="#e6e6e6" shape-rendering="auto">20.05</text>
<path d="M265 101.500l1.500 3 -1.500 3 -1.500-3z M261 104.500h7" fill="#909090" stroke="#909090" stroke-width="1" shape-rendering="auto"/>
<path d="M545 101.500l1.500 3 -1.500 3 -1.500-3z M541 104.500h7" fill="#909090" stroke="#909090" stroke-width="1" shape-rendering="auto"/>
<path d="M665 101.500l1.500 3 -1.500 3 -1.500-3z M661 104.500h7" fill="#909090" stroke="#909090" stroke-width="1" shape-rendering="auto"/>
<path d="M725 101.500l1.500 3 -1.500 3 -1.500-3z M721 104.500h7" fill="#909090" stroke="#909090" stroke-width="1" shape-rendering="auto"/>
<path d="M775 101.500l1.500 3 -1.500 3 -1.500-3z M771 104.500h7" fill="#909090" stroke="#909090" stroke-width="1" shape-rendering="auto"/>
<path d="M805 101.500l1.500 3 -1.500 3 -1.500-3z M801 104.500h7" fill="#909090" stroke="#909090" stroke-width="1" shape-rendering="auto"/>
<path d="M855 101.500l1.500 3 -1.500 3 -1.500-3z M851 104.500h7" fill="#909090" stroke="#909090" stroke-width="1" shape-rendering="auto"/>
<path d="M151.500 158l3 3.500-3 3.500-3-3.500z" fill="#00ff00" shape-rendering="auto"/><text x="151" y="161.500" font-size="12" fill="#00ff00" shape-rendering="auto" font-weight="300">空</text>
<path d="M631.500 443l5 4.500-5 3.500-5-3.500z" fill="#ff0000" shape-rendering="auto"/><text x="630" y="457" font-size="12" fill="#ff0000" shape-rendering="auto" font-weight="300">多</text>
<path d="M1102.500 406l8-8.500h45.500v16.500h-45.500z" fill="#f2f6f0" shape-rendering="auto"/><text x="1155" y="411" fill="#ff2020" text-anchor="end" shape-rendering="auto">31.99</text>
<rect x="1140.500" y="61.500" width="15" height="11" fill="none" stroke="#ffff00"/><rect x="1151" y="62" width="1" height="11" fill="#ffff00"/>
<g fill="#b40000">
<rect x="11" y="493" width="1" height="19"/>
<rect x="21" y="493" width="1" height="5"/>
<rect x="71" y="493" width="1" height="5"/>
<rect x="121" y="493" width="1" height="5"/>
<rect x="171" y="493" width="1" height="5"/>
<rect x="211" y="493" width="1" height="5"/>
<rect x="231" y="493" width="1" height="9"/>
<rect x="261" y="493" width="1" height="9"/>
<rect x="301" y="493" width="1" height="5"/>
<rect x="351" y="493" width="1" height="5"/>
<rect x="401" y="493" width="1" height="5"/>
<rect x="411" y="493" width="1" height="9"/>
<rect x="431" y="493" width="1" height="5"/>
<rect x="481" y="493" width="1" height="5"/>
<rect x="531" y="493" width="1" height="5"/>
<rect x="581" y="493" width="1" height="5"/>
<rect x="611" y="493" width="1" height="9"/>
<rect x="631" y="493" width="1" height="5"/>
<rect x="681" y="493" width="1" height="5"/>
<rect x="731" y="493" width="1" height="5"/>
<rect x="781" y="493" width="1" height="9"/>
<rect x="1031" y="493" width="1" height="5"/>
</g>
<g fill="#ff3030" shape-rendering="auto">
<text x="13.3" y="507">2015</text>
<text x="233.3" y="507">07</text>
<text x="263.3" y="507">08</text>
<text x="413.3" y="507">09</text>
<text x="613.3" y="507">10</text>
<text x="783.3" y="507">11</text>
</g>
<rect x="1080.500" y="494.500" width="20" height="17" rx="3" fill="#2e2e2e" stroke="#484848" shape-rendering="auto"/>
<text x="1114" y="508" fill="#f0f000" shape-rendering="auto" font-weight="300" font-size="15">日线</text>
<g shape-rendering="auto">
<text x="3" y="527" fill="#e6e6e6">MACD(12,26,9)</text>
<text x="112" y="527" fill="#e6e6e6">DIFF -0.587<tspan font-size="17">↓</tspan></text>
<text x="202" y="527" fill="#e6e600">DEA -0.092<tspan font-size="17">↓</tspan></text>
<text x="289" y="527" fill="#ff20ff">MACD -0.990<tspan font-size="17">↑</tspan></text>
<text x="1132" y="570" fill="#ff3c32" text-anchor="middle">0</text>
<text x="1152" y="606" fill="#ff3c32" text-anchor="end">-10.00</text>
</g>
<g stroke="#bc0000" stroke-width="1" stroke-dasharray="1 1">
<line x1="2" y1="565.5" x2="1101" y2="565.5"/><line x1="2" y1="602.5" x2="1101" y2="602.5"/>
<line x1="2" y1="651.5" x2="1101" y2="651.5"/>
<line x1="2" y1="665.5" x2="1101" y2="665.5"/>
<line x1="2" y1="688.5" x2="1101" y2="688.5"/>
<line x1="2" y1="762.5" x2="1101" y2="762.5"/>
</g>
<g fill="#b40000">
<rect x="1102" y="565" width="3" height="1"/>
<rect x="1102" y="602" width="3" height="1"/>
<rect x="1102" y="651" width="3" height="1"/>
<rect x="1102" y="665" width="3" height="1"/>
<rect x="1102" y="688" width="3" height="1"/>
<rect x="1102" y="762" width="3" height="1"/>
</g>
<rect x="21" y="562" width="1" height="3" fill="#ff4646"/>
<rect x="31" y="560" width="1" height="5" fill="#ff4646"/>
<rect x="41" y="559" width="1" height="6" fill="#ff4646"/>
<rect x="51" y="559" width="1" height="6" fill="#ff4646"/>
<rect x="61" y="559" width="1" height="6" fill="#ff4646"/>
<rect x="71" y="559" width="1" height="6" fill="#ff4646"/>
<rect x="81" y="562" width="1" height="3" fill="#ff4646"/>
<rect x="91" y="563" width="1" height="2" fill="#ff4646"/>
<rect x="101" y="564" width="1" height="1" fill="#ff4646"/>
<rect x="111" y="564" width="1" height="1" fill="#ff4646"/>
<rect x="131" y="566" width="1" height="1" fill="#62e6f8"/>
<rect x="141" y="566" width="1" height="5" fill="#62e6f8"/>
<rect x="151" y="566" width="1" height="9" fill="#62e6f8"/>
<rect x="161" y="566" width="1" height="13" fill="#62e6f8"/>
<rect x="171" y="566" width="1" height="16" fill="#62e6f8"/>
<rect x="181" y="566" width="1" height="17" fill="#62e6f8"/>
<rect x="191" y="566" width="1" height="19" fill="#62e6f8"/>
<rect x="201" y="566" width="1" height="23" fill="#62e6f8"/>
<rect x="211" y="566" width="1" height="25" fill="#62e6f8"/>
<rect x="221" y="566" width="1" height="25" fill="#62e6f8"/>
<rect x="231" y="566" width="1" height="26" fill="#62e6f8"/>
<rect x="241" y="566" width="1" height="27" fill="#62e6f8"/>
<rect x="251" y="566" width="1" height="28" fill="#62e6f8"/>
<rect x="261" y="566" width="1" height="25" fill="#62e6f8"/>
<rect x="271" y="566" width="1" height="20" fill="#62e6f8"/>
<rect x="281" y="566" width="1" height="14" fill="#62e6f8"/>
<rect x="291" y="566" width="1" height="9" fill="#62e6f8"/>
<rect x="301" y="566" width="1" height="9" fill="#62e6f8"/>
<rect x="311" y="566" width="1" height="10" fill="#62e6f8"/>
<rect x="321" y="566" width="1" height="4" fill="#62e6f8"/>
<rect x="331" y="566" width="1" height="5" fill="#62e6f8"/>
<rect x="341" y="566" width="1" height="6" fill="#62e6f8"/>
<rect x="351" y="566" width="1" height="8" fill="#62e6f8"/>
<rect x="361" y="566" width="1" height="10" fill="#62e6f8"/>
<rect x="371" y="566" width="1" height="10" fill="#62e6f8"/>
<rect x="381" y="566" width="1" height="10" fill="#62e6f8"/>
<rect x="391" y="566" width="1" height="7" fill="#62e6f8"/>
<rect x="401" y="566" width="1" height="6" fill="#62e6f8"/>
<rect x="411" y="566" width="1" height="5" fill="#62e6f8"/>
<rect x="421" y="566" width="1" height="5" fill="#62e6f8"/>
<rect x="431" y="566" width="1" height="3" fill="#62e6f8"/>
<rect x="441" y="566" width="1" height="1" fill="#62e6f8"/>
<rect x="451" y="564" width="1" height="1" fill="#ff4646"/>
<rect x="461" y="562" width="1" height="3" fill="#ff4646"/>
<rect x="471" y="560" width="1" height="5" fill="#ff4646"/>
<rect x="481" y="560" width="1" height="5" fill="#ff4646"/>
<rect x="491" y="560" width="1" height="5" fill="#ff4646"/>
<rect x="501" y="560" width="1" height="5" fill="#ff4646"/>
<rect x="511" y="559" width="1" height="6" fill="#ff4646"/>
<rect x="521" y="559" width="1" height="6" fill="#ff4646"/>
<rect x="531" y="557" width="1" height="8" fill="#ff4646"/>
<rect x="541" y="557" width="1" height="8" fill="#ff4646"/>
<rect x="551" y="556" width="1" height="9" fill="#ff4646"/>
<rect x="561" y="556" width="1" height="9" fill="#ff4646"/>
<rect x="571" y="557" width="1" height="8" fill="#ff4646"/>
<rect x="581" y="557" width="1" height="8" fill="#ff4646"/>
<rect x="591" y="558" width="1" height="7" fill="#ff4646"/>
<rect x="601" y="559" width="1" height="6" fill="#ff4646"/>
<rect x="611" y="559" width="1" height="6" fill="#ff4646"/>
<rect x="621" y="558" width="1" height="7" fill="#ff4646"/>
<rect x="631" y="557" width="1" height="8" fill="#ff4646"/>
<rect x="641" y="556" width="1" height="9" fill="#ff4646"/>
<rect x="651" y="557" width="1" height="8" fill="#ff4646"/>
<rect x="661" y="556" width="1" height="9" fill="#ff4646"/>
<rect x="671" y="557" width="1" height="8" fill="#ff4646"/>
<rect x="681" y="558" width="1" height="7" fill="#ff4646"/>
<rect x="691" y="558" width="1" height="7" fill="#ff4646"/>
<rect x="701" y="559" width="1" height="6" fill="#ff4646"/>
<rect x="711" y="560" width="1" height="5" fill="#ff4646"/>
<rect x="721" y="558" width="1" height="7" fill="#ff4646"/>
<rect x="731" y="558" width="1" height="7" fill="#ff4646"/>
<rect x="741" y="556" width="1" height="9" fill="#ff4646"/>
<rect x="751" y="557" width="1" height="8" fill="#ff4646"/>
<rect x="761" y="559" width="1" height="6" fill="#ff4646"/>
<rect x="771" y="561" width="1" height="4" fill="#ff4646"/>
<rect x="781" y="562" width="1" height="3" fill="#ff4646"/>
<rect x="791" y="563" width="1" height="2" fill="#ff4646"/>
<rect x="801" y="563" width="1" height="2" fill="#ff4646"/>
<rect x="811" y="564" width="1" height="1" fill="#ff4646"/>
<rect x="821" y="564" width="1" height="1" fill="#ff4646"/>
<rect x="1031" y="566" width="1" height="3" fill="#62e6f8"/>
<rect x="1041" y="566" width="1" height="3" fill="#62e6f8"/>
<rect x="1051" y="566" width="1" height="3" fill="#62e6f8"/>
<rect x="1061" y="566" width="1" height="3" fill="#62e6f8"/>
<rect x="8" y="558" width="7" height="1" fill="#ff4646"/><rect x="11" y="556" width="1" height="5" fill="#ff4646"/><rect x="18.5" y="551.5" width="6" height="5" fill="none" stroke="#ff4646"/><rect x="28.5" y="545.5" width="6" height="4" fill="none" stroke="#ff4646"/><rect x="31" y="544" width="1" height="6" fill="#ff4646"/><rect x="38" y="543" width="7" height="3" fill="#62e6f8"/><rect x="41" y="542" width="1" height="5" fill="#62e6f8"/><rect x="48" y="545" width="7" height="1" fill="#62e6f8"/><rect x="51" y="540" width="1" height="10" fill="#62e6f8"/><rect x="58" y="543" width="7" height="2" fill="#62e6f8"/><rect x="61" y="541" width="1" height="7" fill="#62e6f8"/><rect x="68.5" y="544.5" width="6" height="3" fill="none" stroke="#ff4646"/><rect x="71" y="542" width="1" height="8" fill="#ff4646"/><rect x="78" y="542" width="7" height="2" fill="#62e6f8"/><rect x="81" y="541" width="1" height="5" fill="#62e6f8"/><rect x="88" y="544" width="7" height="2" fill="#ff4646"/><rect x="91" y="543" width="1" height="5" fill="#ff4646"/><rect x="98.5" y="541.5" width="6" height="3" fill="none" stroke="#ff4646"/><rect x="101" y="540" width="1" height="7" fill="#ff4646"/><rect x="108" y="540" width="7" height="2" fill="#62e6f8"/><rect x="111" y="540" width="1" height="3" fill="#62e6f8"/><rect x="118" y="542" width="7" height="4" fill="#62e6f8"/><rect x="121" y="542" width="1" height="5" fill="#62e6f8"/><rect x="128" y="548" width="7" height="3" fill="#62e6f8"/><rect x="131" y="546" width="1" height="7" fill="#62e6f8"/><rect x="138" y="549" width="7" height="2" fill="#ff4646"/><rect x="141" y="547" width="1" height="6" fill="#ff4646"/><rect x="148" y="549" width="7" height="6" fill="#62e6f8"/><rect x="151" y="549" width="1" height="7" fill="#62e6f8"/><rect x="158" y="555" width="7" height="1" fill="#62e6f8"/><rect x="161" y="554" width="1" height="2" fill="#62e6f8"/><rect x="168" y="557" width="7" height="1" fill="#62e6f8"/><rect x="171" y="554" width="1" height="7" fill="#62e6f8"/><rect x="178" y="557" width="7" height="1" fill="#62e6f8"/><rect x="181" y="555" width="1" height="4" fill="#62e6f8"/><rect x="188" y="556" width="7" height="6" fill="#62e6f8"/><rect x="191" y="556" width="1" height="7" fill="#62e6f8"/><rect x="198" y="564" width="7" height="4" fill="#62e6f8"/><rect x="208" y="569" width="7" height="5" fill="#62e6f8"/><rect x="218.5" y="569.5" width="6" height="7" fill="none" stroke="#ff4646"/><rect x="228" y="572" width="7" height="3" fill="#62e6f8"/><rect x="231" y="571" width="1" height="5" fill="#62e6f8"/><rect x="238" y="575" width="7" height="4" fill="#62e6f8"/><rect x="248" y="584" width="7" height="1" fill="#62e6f8"/><rect x="251" y="582" width="1" height="4" fill="#62e6f8"/><rect x="258" y="579" width="7" height="1" fill="#ff4646"/><rect x="268" y="576" width="7" height="2" fill="#ff4646"/><rect x="271" y="576" width="1" height="3" fill="#ff4646"/><rect x="278.5" y="571.5" width="6" height="3" fill="none" stroke="#ff4646"/><rect x="281" y="571" width="1" height="5" fill="#ff4646"/><rect x="288" y="572" width="7" height="1" fill="#62e6f8"/><rect x="291" y="571" width="1" height="3" fill="#62e6f8"/><rect x="298" y="574" width="7" height="1" fill="#62e6f8"/><rect x="301" y="573" width="1" height="3" fill="#62e6f8"/><rect x="308" y="574" width="7" height="5" fill="#62e6f8"/><rect x="311" y="573" width="1" height="7" fill="#62e6f8"/><rect x="318" y="578" width="7" height="2" fill="#ff4646"/><rect x="321" y="576" width="1" height="6" fill="#ff4646"/><rect x="328" y="579" width="7" height="3" fill="#62e6f8"/><rect x="338" y="584" width="7" height="3" fill="#62e6f8"/><rect x="348" y="589" width="7" height="1" fill="#62e6f8"/><rect x="358" y="593" width="7" height="1" fill="#62e6f8"/><rect x="368" y="593" width="7" height="1" fill="#ff4646"/><rect x="371" y="591" width="1" height="4" fill="#ff4646"/><rect x="378" y="594" width="7" height="1" fill="#62e6f8"/><rect x="381" y="592" width="1" height="4" fill="#62e6f8"/><rect x="388" y="591" width="7" height="2" fill="#ff4646"/><rect x="391" y="591" width="1" height="3" fill="#ff4646"/>
<rect x="398" y="592" width="7" height="2" fill="#62e6f8"/><rect x="408" y="592" width="7" height="2" fill="#62e6f8"/><rect x="418" y="595" width="7" height="1" fill="#62e6f8"/><rect x="421" y="594" width="1" height="3" fill="#62e6f8"/><rect x="428" y="596" width="7" height="1" fill="#ff4646"/><rect x="431" y="595" width="1" height="2" fill="#ff4646"/><rect x="438.5" y="595.5" width="6" height="2" fill="none" stroke="#ff4646"/><rect x="448" y="595" width="7" height="1" fill="#ff4646"/><rect x="451" y="594" width="1" height="2" fill="#ff4646"/><rect x="458" y="594" width="7" height="1" fill="#ff4646"/><rect x="468" y="594" width="7" height="1" fill="#ff4646"/><rect x="471" y="593" width="1" height="2" fill="#ff4646"/><rect x="478" y="592" width="7" height="3" fill="#62e6f8"/><rect x="488" y="592" width="7" height="1" fill="#62e6f8"/><rect x="498" y="595" width="7" height="2" fill="#ff4646"/><rect x="501" y="595" width="1" height="3" fill="#ff4646"/><rect x="508" y="596" width="7" height="1" fill="#62e6f8"/><rect x="511" y="595" width="1" height="2" fill="#62e6f8"/><rect x="518" y="594" width="7" height="1" fill="#ff4646"/><rect x="521" y="593" width="1" height="2" fill="#ff4646"/><rect x="528.5" y="594.5" width="6" height="2" fill="none" stroke="#ff4646"/><rect x="538" y="593" width="7" height="1" fill="#62e6f8"/><rect x="548" y="593" width="7" height="1" fill="#ff4646"/><rect x="551" y="592" width="1" height="2" fill="#ff4646"/><rect x="558" y="593" width="7" height="1" fill="#ff4646"/><rect x="568" y="591" width="7" height="2" fill="#62e6f8"/><rect x="578" y="593" width="7" height="1" fill="#ff4646"/><rect x="581" y="592" width="1" height="2" fill="#ff4646"/><rect x="588" y="593" width="7" height="1" fill="#62e6f8"/><rect x="598" y="594" width="7" height="1" fill="#62e6f8"/><rect x="608" y="594" width="7" height="1" fill="#ff4646"/><rect x="618" y="593" width="7" height="1" fill="#ff4646"/><rect x="621" y="592" width="1" height="2" fill="#ff4646"/><rect x="628" y="591" width="7" height="2" fill="#ff4646"/><rect x="631" y="591" width="1" height="3" fill="#ff4646"/><rect x="638" y="590" width="7" height="1" fill="#ff4646"/><rect x="641" y="589" width="1" height="2" fill="#ff4646"/><rect x="648" y="589" width="7" height="1" fill="#62e6f8"/><rect x="658" y="588" width="7" height="2" fill="#ff4646"/><rect x="668" y="589" width="7" height="1" fill="#62e6f8"/><rect x="671" y="588" width="1" height="2" fill="#62e6f8"/><rect x="678" y="588" width="7" height="1" fill="#62e6f8"/><rect x="681" y="587" width="1" height="2" fill="#62e6f8"/><rect x="688" y="587" width="7" height="2" fill="#ff4646"/><rect x="698" y="587" width="7" height="2" fill="#62e6f8"/><rect x="701" y="586" width="1" height="4" fill="#62e6f8"/><rect x="708" y="587" width="7" height="2" fill="#ff4646"/><rect x="718" y="588" width="7" height="1" fill="#ff4646"/><rect x="728" y="584" width="7" height="1" fill="#62e6f8"/><rect x="731" y="582" width="1" height="4" fill="#62e6f8"/><rect x="738.5" y="580.5" width="6" height="3" fill="none" stroke="#ff4646"/><rect x="748" y="581" width="7" height="3" fill="#62e6f8"/><rect x="751" y="580" width="1" height="4" fill="#62e6f8"/><rect x="758" y="581" width="7" height="1" fill="#62e6f8"/><rect x="761" y="580" width="1" height="2" fill="#62e6f8"/><rect x="768" y="582" width="7" height="1" fill="#62e6f8"/><rect x="771" y="581" width="1" height="2" fill="#62e6f8"/><rect x="778" y="582" width="7" height="1" fill="#62e6f8"/>
<rect x="768" y="582" width="7" height="1" fill="#62e6f8"/><rect x="771" y="581" width="1" height="2" fill="#62e6f8"/><rect x="778" y="582" width="7" height="1" fill="#62e6f8"/><rect x="788" y="583" width="7" height="2" fill="#62e6f8"/><rect x="798.5" y="583.5" width="6" height="2" fill="none" stroke="#ff4646"/><rect x="808" y="584" width="7" height="1" fill="#62e6f8"/><rect x="818" y="583" width="7" height="1" fill="#ff4646"/><rect x="821" y="582" width="1" height="2" fill="#ff4646"/><rect x="828" y="583" width="7" height="1" fill="#62e6f8"/>
<rect x="1028" y="586" width="7" height="1" fill="#62e6f8"/><rect x="1038" y="586" width="7" height="1" fill="#62e6f8"/><rect x="1048" y="587" width="7" height="1" fill="#ff4646"/><rect x="1051" y="586" width="1" height="2" fill="#ff4646"/><rect x="1058" y="586" width="7" height="1" fill="#ff4646"/>
<polyline points="11.4,546.9 41.7,541.4 69.4,540 111.1,540.8 121.4,542.8 151.4,551.7 171.4,556.7 191.4,562.8 211.4,571.9 231.4,579.4 251.4,586.4 261.4,589.2 281.4,588.6 301.4,586.4 321.4,586.4 341.4,590 361.4,594.2 381.4,596.9 400,597.5 418.9,598.3 432.8,598.3 449.4,594.2 491.1,589.2 531.4,584.4 560.6,579.4 611.4,574.7 661.4,568.6 691.4,565.6 721.4,562.2 751.4,558.6 780,558.6 776.7,558.1 822.5,559.4" fill="none" stroke="#ffffff" stroke-width="1" />
<polyline points="11.4,547.5 41.7,544.2 69.4,541.9 111.1,541.4 136.1,541.9 161.4,546.4 191.4,553.9 211.4,559.4 231.4,565.6 251.4,572.5 261.4,576.7 281.4,580.3 301.4,583.1 321.4,585.3 341.4,587.2 361.4,589.4 381.4,591.9 400,593.3 407.8,594.2 432.8,595.6 463.3,594.2 491.1,591.9 531.4,587.2 560.6,583.1 611.4,578.1 661.4,571.1 691.4,568.6 721.4,565.8 751.4,562.8 780,560.8 776.7,560 822.5,560" fill="none" stroke="#ffff00" stroke-width="1" />
<polyline points="1025.3,564.4 1061.4,567.8" fill="none" stroke="#ffffff" stroke-width="1" />
<polyline points="1025.3,563.9 1061.4,566.4" fill="none" stroke="#ffff00" stroke-width="1" />
<g shape-rendering="auto">
<text x="3" y="623" fill="#e6e6e6">KDJ(9,3,3)</text>
<text x="81" y="623" fill="#e6e6e6">K 26.011<tspan font-size="17">↑</tspan></text>
<text x="151" y="623" fill="#e6e600">D 25.218<tspan font-size="17">↑</tspan></text>
<text x="223" y="623" fill="#ff20ff">J 27.598<tspan font-size="17">↑</tspan></text>
<text x="1132" y="656" fill="#ff3c32" text-anchor="middle">80</text>
<text x="1132" y="670" fill="#ff3c32" text-anchor="middle">50</text>
<text x="1132" y="693" fill="#ff3c32" text-anchor="middle">0</text>
</g>
<rect x="1103" y="609.500" width="54.500" height="94" fill="none" stroke="#cc0000" stroke-width="1"/>
<polyline points="11.4,658.6 20.8,653.9 31.4,649.7 58.3,651.1 111.4,650.6 121.4,656.7 131.4,665 141.4,669.2 161.4,677.5 181.4,678.9 201.4,684.4 211.4,685.3 221.4,682.2 241.4,685.3 251.4,686.7 261.4,684.4 271.4,678.9 281.4,673.3 291.4,669.2 301.4,667.8 311.4,670 321.4,671.9 331.4,677.5 351.4,683.6 371.4,685.8 391.4,683.6 400,683.6 420.3,687.2 430,684.4 452.2,670.6 471.7,657.5 482.8,660 491.1,665.6 501.4,665.6 511.4,667.2 521.4,667.2 531.4,660.8 551.4,655.3 561.4,652.5 571.4,655.8 581.4,656.7 591.4,661.4 601.4,665.6 611.4,661.7 621.4,656.7 641.4,650.6 661.4,647.5 671.4,647.5 681.4,649.2 691.4,648.3 701.4,653.9 711.4,651.9 721.4,648.3 731.4,650.6 741.4,647.8 751.4,650.6 761.4,652.5 771.4,654.7 776.7,658.1 791.4,663.6 811.4,666.4 822.5,665.8 831.4,662.2 851.4,660 861.4,660 871.4,663.6 881.4,665 891.4,669.2 901.4,674.7 911.4,675.3 921.4,670.6 931.4,667.8 941.4,663.6 951.4,660 961.4,660 971.4,668.6 981.4,671.4 1001.4,674.7 1021.4,675.6 1041.4,678.9 1051.4,679.4 1061.4,676.7" fill="none" stroke="#ffffff" stroke-width="1" />
<polyline points="11.4,653.9 31.4,651.7 58.3,651.1 111.4,650.6 121.4,652.5 141.4,660.8 161.4,669.2 181.4,673.3 201.4,680.3 221.4,682.2 241.4,683.6 261.4,684.4 271.4,681.7 291.4,675.6 311.4,672.5 321.4,671.9 341.4,676.7 361.4,681.1 381.4,683.6 400,683.6 420.3,685.3 430,684.4 452.2,677.5 471.7,669.2 482.8,665.6 491.1,665.6 511.4,665.8 521.4,666.4 531.4,663.6 551.4,659.4 561.4,657.2 581.4,656.7 591.4,658.6 611.4,661.4 631.4,656.7 651.4,652.5 671.4,649.7 691.4,649.2 701.4,651.1 721.4,649.7 741.4,649.2 761.4,650.6 776.7,653.9 791.4,658.1 811.4,662.8 822.5,663.6 841.4,661.7 861.4,660.8 881.4,662.8 891.4,665.6 911.4,670.6 931.4,669.7 951.4,666.4 961.4,664.2 971.4,665.6 991.4,669.2 1011.4,672.5 1031.4,673.9 1051.4,676.9 1061.4,676.1" fill="none" stroke="#ffff00" stroke-width="1" />
<polyline points="11.4,666.9 20.8,653.9 31.4,644.7 41.7,646.9 58.3,651.1 72.2,648.9 91.7,650.3 101.4,648.9 111.4,650.6 121.4,663.6 131.4,680.3 141.4,684.4 151.4,692.8 161.4,694.2 171.4,689.4 181.4,686.7 191.4,690.6 201.4,693.3 211.4,692.2 221.4,684.4 231.4,685.3 241.4,688.6 251.4,690 261.4,685.8 271.4,674.7 281.4,663.6 291.4,656.7 301.4,655.3 311.4,665.6 321.4,670.6 331.4,681.7 341.4,688.6 351.4,692.2 361.4,693.6 371.4,691.4 381.4,688.6 391.4,683.6 400,683.6 420.3,689.4 430,684.4 452.2,653.9 471.7,635.3 482.8,648.3 491.1,665.6 501.4,665.6 511.4,669.2 521.4,669.2 531.4,653.9 541.4,648.9 551.4,646.1 561.4,642.2 571.4,655.8 581.4,656.7 591.4,666.4 601.4,674.7 611.4,663.6 621.4,653.9 631.4,645.6 641.4,639.4 651.4,643.6 661.4,639.4 671.4,642.2 681.4,648.3 691.4,646.4 701.4,660 711.4,653.9 721.4,646.1 731.4,651.1 741.4,644.2 751.4,651.9 761.4,655.8 771.4,660.8 776.7,663.6 791.4,675.3 801.7,672.5 811.4,675.3 822.5,670.6 831.4,660 841.4,659.4 851.4,658.1 861.4,658.6 871.4,665.6 881.4,666.4 891.4,674.7 901.4,687.2 911.4,685.8 921.4,670.6 931.4,667.8 941.4,659.4 951.4,650.6 961.4,653.9 971.4,676.1 981.4,678.3 991.4,678.9 1001.4,682.2 1011.4,678.3 1021.4,678.3 1031.4,680.3 1041.4,685.3 1051.4,685.3 1061.4,676.7" fill="none" stroke="#ff00ff" stroke-width="1" />
<g shape-rendering="auto">
<path d="M5.500 710l5.500 4.500-5.500 4.500z" fill="#ff2020"/>
<text x="18" y="719.500" fill="#e6e6e6" font-weight="300">短线趋势</text>
<text x="86" y="719.500" fill="#ff1818" font-weight="400">短趋势线 33.470<tspan font-size="17">↓</tspan></text>
<text x="1150" y="767" fill="#ff3c32" text-anchor="end">50.00</text>
<text x="1132" y="800" fill="#ff3c32" text-anchor="middle">0</text>
</g>
<polyline points="11.7,752.3 30,748.5 50,745 75,742.5 100,740.7 125,739 143,738.3 155,738.5 167,739.3 185,741.5 200,744 217,748 233,752.3 250,757 267,761.7 285,764.5 300,766.7 333,770 367,774 400,779.3 433,785 467,788.3 480,788.5 500,789.3 547,788.3 627,787.3 680,785.7 713,783.3 747,781 780,780 813,778.3 830,777.3 947,776.7 960,777.5 996.7,778.3 1046.7,779.3 1061.7,779.3" fill="none" stroke="#ff0000" stroke-width="3" stroke-linejoin="round"/>
<rect x="20" y="743" width="3" height="6" fill="#ffff00"/>
<rect x="30" y="736" width="3" height="6" fill="#ffff00"/>
<rect x="260" y="773" width="3" height="1" fill="#ffff00"/>
<rect x="270" y="769" width="3" height="2" fill="#ffff00"/>
<rect x="390" y="786" width="3" height="2" fill="#ffff00"/>
<rect x="430" y="791" width="3" height="1" fill="#ffff00"/>
<rect x="440" y="788" width="3" height="3" fill="#ffff00"/>
<rect x="500" y="788" width="3" height="2" fill="#ffff00"/>
<rect x="530" y="787" width="3" height="2" fill="#ffff00"/>
<rect x="710" y="781" width="3" height="2" fill="#ffff00"/>
<rect x="722" y="776" width="3" height="1" fill="#ffff00"/>
<rect x="800" y="777" width="3" height="3" fill="#ffff00"/>
<g shape-rendering="auto" font-size="12" font-weight="400"><text x="51.500" y="743" fill="#00ff00">卖出</text><text x="51.500" y="744" fill="#ffff00">卖出</text><text x="731" y="783.500" fill="#00ff00">卖出</text><text x="731" y="784.500" fill="#ffff00">卖出</text></g>
<g fill="#b40000">
<rect x="61" y="803" width="1" height="16"/>
<rect x="121" y="803" width="1" height="16"/>
<rect x="181" y="803" width="1" height="16"/>
<rect x="241" y="803" width="1" height="16"/>
<rect x="301" y="803" width="1" height="16"/>
<rect x="361" y="803" width="1" height="16"/>
<rect x="421" y="803" width="1" height="16"/>
<rect x="481" y="803" width="1" height="16"/>
<rect x="541" y="803" width="1" height="16"/>
</g>
<g shape-rendering="auto" text-anchor="middle" font-weight="300">
<text x="31" y="816" fill="#e6e6e6" font-weight="400">MA</text>
<text x="91" y="816" fill="#20f0ff" font-weight="400">KDJ</text>
<text x="151" y="816" fill="#20f0ff" font-weight="400">MACD</text>
<text x="211" y="816" fill="#e6e6e6">操盘线</text>
<text x="271" y="816" fill="#e6e6e6">自动波浪</text>
<text x="331" y="816" fill="#e6e6e6">顾比均线</text>
<text x="391" y="816" fill="#20f0ff">短线趋势</text>
<text x="451" y="816" fill="#e6e6e6">九转序列</text>
<text x="511" y="816" fill="#20f0ff">多空通道</text>
<text x="1110" y="816" fill="#e6e6e6">指</text><text x="1147" y="816" fill="#ff2020">组</text><rect x="1139.500" y="803" width="1" height="16" fill="#b40000" shape-rendering="crispEdges"/>
</g>
</svg>
<div class="t yl" style="left:3px;top:62px;font-size:14px"><span class="cj">海虹控股</span></div>
<div class="t " style="left:64px;top:62px;font-size:14px"><span style="color:#e0e6f0">2015/12/10</span></div>
<div class="t red" style="left:141px;top:62px;font-size:14px"><span class="cj">开</span>31.50<span class="ar">↑</span></div>
<div class="t red" style="left:200px;top:62px;font-size:14px"><span class="cj">高</span>32.20<span class="ar">↓</span></div>
<div class="t cy" style="left:259px;top:62px;font-size:14px"><span class="cj">低</span>31.35<span class="ar">↑</span></div>
<div class="t red" style="left:318px;top:62px;font-size:14px"><span class="cj">收</span>31.99<span class="ar">↑</span></div>
<div class="t red" style="left:376px;top:62px;font-size:14px"><span class="cj">量</span>209088<span class="ar">↑</span></div>
<div class="t red" style="left:448px;top:62px;font-size:14px"><span class="cj">额</span>66580<span class="ar">↑</span></div>
<div class="t wh" style="left:511px;top:62px;font-size:14px"><span class="cj">换</span>2.33%</div>
<div class="t wh" style="left:569px;top:62px;font-size:14px"><span class="cj">振</span>2.70%</div>
<div class="t red" style="left:628px;top:62px;font-size:14px"><span class="cj">涨</span>(0.50)1.59%<span class="ar">↑</span></div>
<div class="t cj wh" style="left:3px;top:81px;font-size:14px">多空通道</div>
<div class="abs" id="rp" style="left:1158px;top:59px;width:282px;height:762px;font-size:16px">
<div class="abs" style="left:0;top:0;width:282px;height:1px;background:#b40000"></div>
<div class="abs" style="left:0;top:24px;width:281px;height:1px;background:#b40000"></div>
<div class="abs" style="left:0;top:46px;width:281px;height:1px;background:#b40000"></div>
<div class="abs" style="left:0;top:156px;width:281px;height:1px;background:#b40000"></div>
<div class="abs" style="left:0;top:266px;width:281px;height:1px;background:#b40000"></div>
<div class="abs" style="left:0;top:398px;width:281px;height:1px;background:#b40000"></div>
<div class="abs" style="left:0;top:486px;width:281px;height:1px;background:#b40000"></div>
<div class="abs" style="left:280px;top:0;width:1px;height:762px;background:#b40000"></div>
<svg class="abs" style="left:1px;top:1px" width="38" height="20" viewBox="0 0 38 20"><g fill="none" stroke="#ff0000" stroke-width="1.400"><circle cx="9.500" cy="9.500" r="8"/><circle cx="27.500" cy="9.500" r="8"/></g><text x="9.500" y="14" font-family="Liberation Sans,sans-serif" font-size="12.500" font-weight="bold" fill="#ff0000" text-anchor="middle">R</text><path d="M23.500 6.500h8M23.500 9.500h8M23.500 12.500h8" stroke="#ff0000" stroke-width="1.300"/></svg>
<div class="t" style="left:70px;top:5px;font-size:16px"><span style="color:#b4c6ea">000503</span> <span style="color:#20e8ff;font-size:16px">海虹控股</span><span class="wh">(1)</span></div>
<div class="t cj lb" style="left:3px;top:23px;line-height:22px">委比</div><div class="t grn" style="right:150px;top:23px;line-height:22px">-82.28%</div><div class="t cj lb" style="left:140px;top:23px;line-height:22px">委差</div><div class="t grn" style="right:7px;top:23px;line-height:22px">-353</div>
<div class="t cj lb" style="left:3px;top:45px;line-height:22px">卖<span style="font-size:10px;position:relative;top:-1px;margin-left:1px">⑤</span></div><div class="t red" style="right:150px;top:45px;line-height:22px">32.03</div><div class="t grn" style="right:7px;top:45px;line-height:22px">645</div>
<div class="t cj lb" style="left:3px;top:67px;line-height:22px">卖<span style="font-size:10px;position:relative;top:-1px;margin-left:1px">④</span></div><div class="t red" style="right:150px;top:67px;line-height:22px">32.02</div><div class="t grn" style="right:7px;top:67px;line-height:22px">267</div>
<div class="t cj lb" style="left:3px;top:89px;line-height:22px">卖<span style="font-size:10px;position:relative;top:-1px;margin-left:1px">③</span></div><div class="t red" style="right:150px;top:89px;line-height:22px">32.01</div><div class="t grn" style="right:7px;top:89px;line-height:22px">107</div>
<div class="t cj lb" style="left:3px;top:111px;line-height:22px">卖<span style="font-size:10px;position:relative;top:-1px;margin-left:1px">②</span></div><div class="t red" style="right:150px;top:111px;line-height:22px">32.00</div><div class="t grn" style="right:7px;top:111px;line-height:22px">622</div>
<div class="t cj lb" style="left:3px;top:133px;line-height:22px">卖<span style="font-size:10px;position:relative;top:-1px;margin-left:1px">①</span></div><div class="t red" style="right:150px;top:133px;line-height:22px">31.99</div><div class="t grn" style="right:7px;top:133px;line-height:22px">433</div>
<div class="t cj lb" style="left:3px;top:155px;line-height:22px">买<span style="font-size:10px;position:relative;top:-1px;margin-left:1px">①</span></div><div class="t red" style="right:150px;top:155px;line-height:22px">31.98</div><div class="t red" style="right:7px;top:155px;line-height:22px">151</div>
<div class="t cj lb" style="left:3px;top:177px;line-height:22px">买<span style="font-size:10px;position:relative;top:-1px;margin-left:1px">②</span></div><div class="t red" style="right:150px;top:177px;line-height:22px">31.97</div><div class="t red" style="right:7px;top:177px;line-height:22px">31</div>
<div class="t cj lb" style="left:3px;top:199px;line-height:22px">买<span style="font-size:10px;position:relative;top:-1px;margin-left:1px">③</span></div><div class="t red" style="right:150px;top:199px;line-height:22px">31.96</div><div class="t red" style="right:7px;top:199px;line-height:22px">119</div>
<div class="t cj lb" style="left:3px;top:221px;line-height:22px">买<span style="font-size:10px;position:relative;top:-1px;margin-left:1px">④</span></div><div class="t red" style="right:150px;top:221px;line-height:22px">31.95</div><div class="t red" style="right:7px;top:221px;line-height:22px">88</div>
<div class="t cj lb" style="left:3px;top:243px;line-height:22px">买<span style="font-size:10px;position:relative;top:-1px;margin-left:1px">⑤</span></div><div class="t red" style="right:150px;top:243px;line-height:22px">31.94</div><div class="t red" style="right:7px;top:243px;line-height:22px">547</div>
<div class="t cj yl" style="left:3px;top:265px;line-height:22px">最新</div><div class="t red" style="right:150px;top:265px;line-height:22px">31.99</div><div class="t cj lb" style="left:140px;top:265px;line-height:22px">今开</div><div class="t red" style="right:7px;top:265px;line-height:22px">31.50</div>
<div class="t cj lb" style="left:3px;top:287px;line-height:22px">涨跌</div><div class="t red" style="right:150px;top:287px;line-height:22px">0.50</div><div class="t cj lb" style="left:140px;top:287px;line-height:22px">前收</div><div class="t wh" style="right:7px;top:287px;line-height:22px">31.49</div>
<div class="t cj lb" style="left:3px;top:309px;line-height:22px">涨幅</div><div class="t red" style="right:150px;top:309px;line-height:22px">1.59%</div><div class="t cj lb" style="left:140px;top:309px;line-height:22px">最高</div><div class="t red" style="right:7px;top:309px;line-height:22px">32.20</div>
<div class="t cj lb" style="left:3px;top:331px;line-height:22px">振幅</div><div class="t wh" style="right:150px;top:331px;line-height:22px">2.70%</div><div class="t cj lb" style="left:140px;top:331px;line-height:22px">最低</div><div class="t grn" style="right:7px;top:331px;line-height:22px">31.35</div>
<div class="t cj lb" style="left:3px;top:353px;line-height:22px">总手</div><div class="t wh" style="right:150px;top:353px;line-height:22px">209088</div><div class="t cj lb" style="left:140px;top:353px;line-height:22px">量比</div><div class="t wh" style="right:7px;top:353px;line-height:22px">0.99</div>
<div class="t cj lb" style="left:3px;top:375px;line-height:22px">外盘</div><div class="t red" style="right:150px;top:375px;line-height:22px">105415</div><div class="t cj lb" style="left:140px;top:375px;line-height:22px">内盘</div><div class="t grn" style="right:7px;top:375px;line-height:22px">103673</div>
<div class="t cj lb" style="left:3px;top:397px;line-height:22px">换手</div><div class="t wh" style="right:150px;top:397px;line-height:22px">2.33%</div><div class="t cj lb" style="left:140px;top:397px;line-height:22px">股本</div><div class="t wh" style="right:7px;top:397px;line-height:22px">8.99<span class="cj">亿</span></div>
<div class="t cj lb" style="left:3px;top:419px;line-height:22px">市值</div><div class="t wh" style="right:150px;top:419px;line-height:22px">288<span class="cj">亿</span></div><div class="t cj lb" style="left:140px;top:419px;line-height:22px">流通</div><div class="t wh" style="right:7px;top:419px;line-height:22px">8.98<span class="cj">亿</span></div>
<div class="t cj lb" style="left:3px;top:441px;line-height:22px">收益</div><div class="t wh" style="right:150px;top:441px;line-height:22px">-0.11<span style="font-size:10px;position:relative;top:-1px;margin-left:1px">③</span></div><div class="t cj lb" style="left:140px;top:441px;line-height:22px">市盈</div><div class="t wh" style="right:7px;top:441px;line-height:22px">-222.15</div>
<div class="t cj yl" style="left:3px;top:463px;line-height:22px">行业</div><div class="t wh" style="right:150px;top:463px;line-height:22px"><span class="cj">电子信息</span></div><div class="t cj yl" style="left:140px;top:463px;line-height:22px">板块</div><div class="t wh" style="right:7px;top:463px;line-height:22px"><span class="cj">智能医疗</span> ...</div>
<div class="t" style="right:240px;top:488px;line-height:22px;color:#dfe6f4;font-size:16px">14:56</div>
<div class="t red" style="right:137px;top:488px;line-height:22px">31.94</div>
<div class="t red" style="left:144px;top:488px;line-height:22px;font-size:20px">↑</div>
<div class="t red" style="right:20px;top:488px;line-height:22px">3</div>
<div class="t" style="right:240px;top:509px;line-height:22px;color:#dfe6f4;font-size:14px">:32</div>
<div class="t red" style="right:137px;top:510px;line-height:22px">31.94</div>
<div class="t red" style="right:20px;top:510px;line-height:22px">60</div>
<div class="t" style="right:240px;top:531px;line-height:22px;color:#dfe6f4;font-size:14px">:38</div>
<div class="t red" style="right:137px;top:532px;line-height:22px">31.94</div>
<div class="t red" style="right:20px;top:532px;line-height:22px">129</div>
<div class="t" style="right:240px;top:553px;line-height:22px;color:#dfe6f4;font-size:14px">:41</div>
<div class="t red" style="right:137px;top:554px;line-height:22px">31.95</div>
<div class="t red" style="left:144px;top:554px;line-height:22px;font-size:20px">↑</div>
<div class="t red" style="right:20px;top:554px;line-height:22px">171</div>
<div class="t" style="right:240px;top:575px;line-height:22px;color:#dfe6f4;font-size:14px">:44</div>
<div class="t red" style="right:137px;top:576px;line-height:22px">31.95</div>
<div class="t grn" style="right:20px;top:576px;line-height:22px">32</div>
<div class="t" style="right:240px;top:597px;line-height:22px;color:#dfe6f4;font-size:14px">:50</div>
<div class="t red" style="right:137px;top:598px;line-height:22px">31.95</div>
<div class="t grn" style="right:20px;top:598px;line-height:22px">95</div>
<div class="t" style="right:240px;top:619px;line-height:22px;color:#dfe6f4;font-size:14px">:53</div>
<div class="t red" style="right:137px;top:620px;line-height:22px">31.95</div>
<div class="t grn" style="right:20px;top:620px;line-height:22px">38</div>
<div class="t" style="right:240px;top:641px;line-height:22px;color:#dfe6f4;font-size:14px">:56</div>
<div class="t red" style="right:137px;top:642px;line-height:22px">31.95</div>
<div class="t grn" style="right:20px;top:642px;line-height:22px">23</div>
<div class="t" style="right:240px;top:663px;line-height:22px;color:#dfe6f4;font-size:14px">:59</div>
<div class="t red" style="right:137px;top:664px;line-height:22px">31.95</div>
<div class="t grn" style="right:20px;top:664px;line-height:22px">99</div>
<div class="t" style="right:240px;top:686px;line-height:22px;color:#dfe6f4;font-size:16px">14:57</div>
<div class="t red" style="right:137px;top:686px;line-height:22px">31.94</div>
<div class="t grn" style="left:144px;top:686px;line-height:22px;font-size:20px">↓</div>
<div class="t grn" style="right:20px;top:686px;line-height:22px">24</div>
<div class="t" style="right:240px;top:708px;line-height:22px;color:#dfe6f4;font-size:16px">15:00</div>
<div class="t red" style="right:137px;top:708px;line-height:22px">31.99</div>
<div class="t red" style="left:144px;top:708px;line-height:22px;font-size:20px">↑</div>
<div class="t red" style="right:20px;top:708px;line-height:22px">3699</div>
<div class="abs" style="left:3px;top:686px;width:260px;height:1px;background:repeating-linear-gradient(90deg,#c80000 0,#c80000 1px,transparent 1px,transparent 4px)"></div>
<div class="abs" style="left:3px;top:708px;width:260px;height:1px;background:repeating-linear-gradient(90deg,#c80000 0,#c80000 1px,transparent 1px,transparent 4px)"></div>
<div class="abs" style="left:264px;top:487px;width:1px;height:256px;background:#b40000"></div>
<div class="abs" style="left:264px;top:502px;width:17px;height:1px;background:#b40000"></div>
<div class="abs" style="left:264px;top:517px;width:17px;height:1px;background:#b40000"></div>
<div class="abs" style="left:264px;top:742px;width:17px;height:1px;background:#b40000"></div>
<svg class="abs" style="left:265px;top:487px" width="15" height="256" viewBox="0 0 15 256"><path d="M1 7.500h5" stroke="#ddd" stroke-width="1"/><path d="M7 4v7M12 5v5M8 7.500h4" stroke="#eee" stroke-width="1.300"/><path d="M7.500 19.500l4.500 9h-9z" fill="#b40000"/><path d="M7.500 251l4.500-9h-9z" fill="#d00000"/><rect x="0" y="162" width="15" height="76" fill="#5a0000"/><g stroke="#c00000" stroke-width="1"><path d="M0 163.500h15"/><path d="M0 165.500h15"/><path d="M0 167.500h15"/><path d="M0 169.500h15"/><path d="M0 171.500h15"/><path d="M0 173.500h15"/><path d="M0 175.500h15"/><path d="M0 177.500h15"/><path d="M0 179.500h15"/><path d="M0 181.500h15"/><path d="M0 183.500h15"/><path d="M0 185.500h15"/><path d="M0 187.500h15"/><path d="M0 189.500h15"/><path d="M0 191.500h15"/><path d="M0 193.500h15"/><path d="M0 195.500h15"/><path d="M0 197.500h15"/><path d="M0 199.500h15"/><path d="M0 201.500h15"/><path d="M0 203.500h15"/><path d="M0 205.500h15"/><path d="M0 207.500h15"/><path d="M0 209.500h15"/><path d="M0 211.500h15"/><path d="M0 213.500h15"/><path d="M0 215.500h15"/><path d="M0 217.500h15"/><path d="M0 219.500h15"/><path d="M0 221.500h15"/><path d="M0 223.500h15"/><path d="M0 225.500h15"/><path d="M0 227.500h15"/><path d="M0 229.500h15"/><path d="M0 231.500h15"/><path d="M0 233.500h15"/><path d="M0 235.500h15"/><path d="M0 237.500h15"/></g></svg>
<div class="abs" style="left:0;top:742px;width:282px;height:1px;background:#b40000"></div>
<svg class="abs" style="left:0;top:743px" width="282" height="19" viewBox="0 0 282 19" font-family="Liberation Sans, Noto Sans CJK SC, sans-serif"><defs><linearGradient id="tg" x1="0" y1="0" x2="0" y2="1"><stop offset="0" stop-color="#b81010"/><stop offset="1" stop-color="#520000"/></linearGradient></defs><path d="M2 0H38C35 7 34 16 28 16.500H12C6 16 5 7 2 0Z" fill="url(#tg)" stroke="#484848" stroke-width="1"/><path d="M34 0H70C67 7 66 16 60 16.500H44C38 16 37 7 34 0Z" fill="#262626" stroke="#484848" stroke-width="1"/><path d="M66 0H102C99 7 98 16 92 16.500H76C70 16 69 7 66 0Z" fill="#262626" stroke="#484848" stroke-width="1"/><path d="M98 0H134C131 7 130 16 124 16.500H108C102 16 101 7 98 0Z" fill="#262626" stroke="#484848" stroke-width="1"/><path d="M130 0H166C163 7 162 16 156 16.500H140C134 16 133 7 130 0Z" fill="#262626" stroke="#484848" stroke-width="1"/><path d="M162 0H198C195 7 194 16 188 16.500H172C166 16 165 7 162 0Z" fill="#262626" stroke="#484848" stroke-width="1"/><path d="M194 0H230C227 7 226 16 220 16.500H204C198 16 197 7 194 0Z" fill="#262626" stroke="#484848" stroke-width="1"/><path d="M226 0H262C259 7 258 16 252 16.500H236C230 16 229 7 226 0Z" fill="#262626" stroke="#484848" stroke-width="1"/><text x="18" y="13" font-size="13" fill="#f0f0f0" text-anchor="middle" font-weight="700">细</text><text x="50" y="13" font-size="13" fill="#f0f0f0" text-anchor="middle" font-weight="300">逐</text><text x="82" y="13" font-size="13" fill="#f0f0f0" text-anchor="middle" font-weight="300">财</text><text x="114" y="13" font-size="13" fill="#f0f0f0" text-anchor="middle" font-weight="300">筹</text><text x="146" y="13" font-size="13" fill="#f0f0f0" text-anchor="middle" font-weight="300">指</text><text x="178" y="13" font-size="13" fill="#f0f0f0" text-anchor="middle" font-weight="300">势</text><text x="210" y="13" font-size="13" fill="#f0f0f0" text-anchor="middle" font-weight="300">解</text><text x="242" y="13" font-size="13" fill="#f0f0f0" text-anchor="middle" font-weight="300">板</text></svg>
<div class="abs" style="left:0;top:760px;width:282px;height:1px;background:#b40000"></div>
</div>
<div class="abs" id="sb" style="left:0;top:821px;width:1440px;height:29px;background:#000;font-size:16px">
<div class="t wh cj" style="left:16px;top:7px;">沪</div>
<div class="t grn" style="left:40.5px;top:7px;">3455.50</div>
<div class="t grn" style="left:106.5px;top:7px;">-16.94</div>
<div class="t grn" style="left:159px;top:7px;">-0.49%</div>
<div class="t wh" style="left:216.5px;top:7px;">2795.00<span class="cj">亿</span></div>
<div class="abs" style="left:307px;top:6px;width:39px;height:7px;background:#ff5050"></div>
<div class="abs" style="left:356px;top:1px;width:1px;height:25px;background:#b40000"></div>
<div class="t wh cj" style="left:363px;top:7px;">深</div>
<div class="t red" style="left:389px;top:7px;">12181.03</div>
<div class="t red" style="left:463.5px;top:7px;">1.20</div>
<div class="t red" style="left:502.5px;top:7px;">0.01%</div>
<div class="t wh" style="left:556px;top:7px;">4492.40<span class="cj">亿</span></div>
<div class="abs" style="left:645px;top:6px;width:44px;height:7px;background:#ff5050"></div>
<div class="t wh cj" style="left:713px;top:7px;">中小板指</div>
<div class="t red" style="left:785px;top:7px;">8134.48</div>
<div class="t red" style="left:851px;top:7px;">18.72</div>
<div class="t red" style="left:898px;top:7px;">0.23%</div>
<div class="t wh" style="left:952px;top:7px;">1987.13<span class="cj">亿</span></div>
<div class="abs" style="left:1052px;top:1px;width:1px;height:25px;background:#b40000"></div>
<div class="abs" style="left:1179px;top:1px;width:1px;height:25px;background:#b40000"></div>
<div class="abs" style="left:1306px;top:1px;width:1px;height:25px;background:#b40000"></div>
<div class="abs" style="left:1340px;top:1px;width:1px;height:25px;background:#b40000"></div>
<svg class="abs" style="left:1064px;top:1px" width="106" height="20" viewBox="0 0 106 20"><path d="M5 13c0-6 2-9 6-9s6 3 6 9l1.500 2h-15z" fill="#2d8ee8" transform="rotate(-18 11 10)"/><path d="M5 12c0-5 1-7 3-8" stroke="#9fd0ff" stroke-width="1.500" fill="none" transform="rotate(-18 11 10)"/><circle cx="12.500" cy="16.500" r="2" fill="#e06a10"/><circle cx="39.500" cy="10" r="8" fill="#1f7be0"/><text x="39.500" y="14.500" font-family="Liberation Sans,sans-serif" font-size="13" font-weight="bold" fill="#04122e" text-anchor="middle">S</text><path d="M39.500 3v14" stroke="#04122e" stroke-width="1.200"/><rect x="58.500" y="2" width="16" height="15" rx="2" fill="#2a86e6"/><text x="66.500" y="14" font-family="Liberation Sans, Noto Sans CJK SC, sans-serif" font-size="12" font-weight="700" fill="#0a1a40" text-anchor="middle">买</text><circle cx="94.500" cy="10" r="8" fill="#22c022"/><path d="M94.500 4l6 6-6 6-6-6z" fill="#000"/><path d="M94.500 0.500l3 4h-6zM94.500 19.500l3-4h-6zM85 10l4-3v6zM104 10l-4-3v6z" fill="#22c022"/></svg>
<div class="t" style="left:1208px;top:5px;font-size:12px;letter-spacing:.6px;color:#2a8cff">用户中心</div>
<svg class="abs" style="left:1312px;top:2px" width="22" height="22" viewBox="0 0 22 22"><g fill="none" stroke="#30a8d8" stroke-width="1.300"><path d="M7.500 6.500a5 5 0 0 0 0 7M14.500 6.500a5 5 0 0 1 0 7M5 4a8.500 8.500 0 0 0 0 12M17 4a8.500 8.500 0 0 1 0 12"/></g><circle cx="11" cy="10" r="2" fill="#30a8d8"/><path d="M11 11v10" stroke="#9aa0a8" stroke-width="2"/></svg>
<div class="t" style="left:1343px;top:2px;font-family:'Liberation Mono',monospace;font-weight:bold;font-size:15px;color:#fff">15:44:12</div>
</div>
<div class="abs" id="cm" style="left:822px;top:263px;width:203px;height:395px;background:#f2f2f2;border:1px solid #cfcfcf;box-shadow:2px 2px 3px rgba(0,0,0,.35);font-size:15px;color:#1a1a1a;font-family:'Liberation Sans','Noto Sans CJK SC',sans-serif">
<div class="t" style="left:36px;top:3.5px;line-height:24px;">选择公式</div>
<svg class="abs" style="left:183px;top:9px" width="8" height="12" viewBox="0 0 8 12"><path d="M1.500 1.500L6 6 1.500 10.500" fill="none" stroke="#333" stroke-width="1.200"/></svg>
<div class="t" style="left:36px;top:27.5px;line-height:24px;">调整指标参数</div>
<div class="t" style="left:36px;top:51.5px;line-height:24px;">关闭指标</div>
<div class="t" style="left:36px;top:75.5px;line-height:24px;">修改指标公式</div>
<div class="t" style="left:36px;top:99.5px;line-height:24px;">指标用法说明</div>
<div class="t" style="left:36px;top:123.5px;line-height:24px;">导出公式</div>
<div class="abs" style="left:32px;top:150px;width:167px;height:1px;background:#d4d4d4"></div>
<div class="t" style="left:36px;top:154.5px;line-height:24px;">复制数据</div>
<div class="abs" style="left:32px;top:181px;width:167px;height:1px;background:#d4d4d4"></div>
<div class="abs" style="left:2px;top:185px;width:197px;height:24px;background:#91c9f7"></div>
<div class="t" style="left:36px;top:185.5px;line-height:24px;">叠加K线</div>
<div class="t" style="left:36px;top:209.5px;line-height:24px;">反转坐标</div>
<div class="t" style="left:36px;top:233.5px;line-height:24px;">删除副图窗口</div>
<div class="t" style="left:36px;top:257.5px;line-height:24px;">添加副图窗口</div>
<div class="abs" style="left:32px;top:284px;width:167px;height:1px;background:#d4d4d4"></div>
<div class="t" style="left:36px;top:288.5px;line-height:24px;">条件选股</div>
<div class="t" style="left:36px;top:312.5px;line-height:24px;color:#8a8a8a;">指标横向分布</div>
<div class="abs" style="left:32px;top:339px;width:167px;height:1px;background:#d4d4d4"></div>
<div class="t" style="left:36px;top:343.5px;line-height:24px;">取消常用</div>
<div class="abs" style="left:2px;top:367px;width:24px;height:24px;background:#91c9f7"></div>
<svg class="abs" style="left:8px;top:373px" width="14" height="12" viewBox="0 0 14 12"><path d="M1.500 6l3.500 3.500L12.500 1.500" fill="none" stroke="#2a2a2a" stroke-width="1.600"/></svg>
<div class="t" style="left:36px;top:367.5px;line-height:24px;">显示常用指标栏</div>
</div>
<div class="abs" id="tk" style="left:0;top:850px;width:1440px;height:50px;background:#03050a">
<svg class="abs" style="left:20px;top:15px" width="20" height="20" viewBox="0 0 20 20"><path d="M0 2.800L8.200 1.700V9.500H0zM9.200 1.500L20 0V9.500H9.200zM0 10.500H8.200V18.300L0 17.200zM9.200 10.500H20V20L9.200 18.500z" fill="#fff"/></svg>
<div class="abs" style="left:60px;top:0;width:430px;height:50px;background:#363636"></div>
<div class="t" style="left:71px;top:15px;font-size:20.300px;color:#a6a6a6;font-weight:300">搜索 Web 和 Windows</div>
<div class="abs" style="left:918px;top:0;width:61px;height:50px;background:#33363b"></div>
<div class="abs" style="left:613px;top:47px;width:51px;height:3px;background:#76b9ed"></div>
<div class="abs" style="left:737px;top:47px;width:51px;height:3px;background:#76b9ed"></div>
<div class="abs" style="left:861px;top:47px;width:51px;height:3px;background:#76b9ed"></div>
<div class="abs" style="left:918px;top:47px;width:61px;height:3px;background:#76b9ed"></div>
<div class="abs" style="left:985px;top:47px;width:51px;height:3px;background:#76b9ed"></div>
<div class="abs" style="left:782px;top:47px;width:6px;height:3px;background:#5a8cb8"></div>
<svg class="abs" style="left:507px;top:14px" width="26" height="22" viewBox="0 0 26 22"><g fill="none" stroke="#fff" stroke-width="1.300"><rect x="5.500" y="2.500" width="15" height="16"/><path d="M3 5.500H1V15.500H3M23 5.500h2v10h-2"/></g></svg>
<svg class="abs" style="left:565px;top:14px" width="23" height="23" viewBox="0 0 23 23"><g fill="#e6e6e6"><circle cx="6" cy="6" r="5.600"/><circle cx="17" cy="6" r="5.600"/><circle cx="6" cy="17" r="5.600"/><circle cx="17" cy="17" r="5.600"/><rect x="6" y="6" width="11" height="11"/></g><g fill="none" stroke="#03050a" stroke-width="1.300"><path d="M11.500 11.500C11.500 7 13 3 16.500 1"/><path d="M11.500 11.500C16 11.500 20 13 22 16.500"/><path d="M11.500 11.500C11.500 16 10 20 6.500 22"/><path d="M11.500 11.500C7 11.500 3 10 1 6.500"/></g></svg>
<svg class="abs" style="left:621px;top:6px" width="36" height="38" viewBox="0 0 36 38"><defs><radialGradient id="ge" cx="40%" cy="30%" r="75%"><stop offset="0" stop-color="#b4ec6a"/><stop offset="1" stop-color="#4cb41e"/></radialGradient></defs><path d="M4.500 32C2 28 10 14 20 7S31 2.500 30 5" fill="none" stroke="#3aa818" stroke-width="1.600"/><circle cx="17" cy="18.500" r="12.500" fill="url(#ge)" stroke="#f2f6ee" stroke-width="1.400"/><text x="17.500" y="28" font-family="Liberation Sans,sans-serif" font-size="33" font-weight="bold" fill="#fff" text-anchor="middle">e</text><path d="M5 31C4 27 9 19 14 13" fill="none" stroke="#58c028" stroke-width="1.600"/></svg>
<svg class="abs" style="left:684px;top:8px" width="32" height="34" viewBox="0 0 32 34"><text x="16" y="30" font-family="Liberation Sans,sans-serif" font-size="47" font-weight="bold" fill="#0b7ad6" text-anchor="middle" transform="translate(16 0) scale(.9 1) translate(-16 0)">e</text><path d="M3.300 15.500C4.500 8.500 9.500 4.800 15.500 4.300C11 6.200 8.200 9.800 7.300 14.500Z" fill="#0b7ad6"/></svg>
<svg class="abs" style="left:747px;top:13px" width="30" height="26" viewBox="0 0 30 26"><path d="M1 3h9l2 2h16v20H1z" fill="#f8d775"/><path d="M1 8h27v17H1z" fill="#fbe6a0"/><rect x="3" y="4" width="4" height="1.500" fill="#4aa8f0"/><path d="M7 25v-8h15v8h-4v-4h-7v4z" fill="#2aa8f0"/></svg>
<svg class="abs" style="left:810px;top:9px" width="28" height="32" viewBox="0 0 28 32"><path d="M9 9C9 3 19 3 19 9" fill="none" stroke="#fff" stroke-width="1.600"/><path d="M2 9H26L24 30H4z" fill="#fff"/><g fill="#05080d"><rect x="8" y="14" width="5" height="5"/><rect x="14.500" y="14" width="5" height="5"/><rect x="8" y="20.500" width="5" height="5"/><rect x="14.500" y="20.500" width="5" height="5"/></g></svg>
<svg class="abs" style="left:870px;top:14px" width="32" height="26" viewBox="0 0 32 26"><path d="M1 14L13 2l6 8-4 10H6z" fill="#000090"/><path d="M14 4l4-3 5 2 6 3-4 8-6 3-3-6z" fill="#ff0000"/></svg>
<svg class="abs" style="left:933px;top:10px" width="31" height="31" viewBox="0 0 31 31"><circle cx="15.500" cy="15.500" r="15" fill="url(#kg)"/><text x="15" y="22" font-family="Liberation Sans,sans-serif" font-size="17" font-weight="bold" font-style="italic" fill="#0a0a0a" text-anchor="middle" letter-spacing="-2">KT</text></svg>
<svg class="abs" style="left:996px;top:12px" width="28" height="27" viewBox="0 0 28 27"><rect x="1" y="1" width="26" height="25" fill="none" stroke="#fff" stroke-width="1.600"/><path d="M1 26L11 9l6 9 3-4 7 12z" fill="#fff"/></svg>
<svg class="abs" style="left:1095px;top:14px" width="14" height="24" viewBox="0 0 14 24"><rect x="3" y="1" width="8" height="5" fill="#ddd"/><rect x="1" y="6" width="12" height="17" rx="1.500" fill="#3ab030"/><path d="M7 9v10M4.500 13l2.500 3 2.500-4" stroke="#fff" stroke-width="1.200" fill="none"/></svg>
<svg class="abs" style="left:1124px;top:20px" width="18" height="11" viewBox="0 0 18 11"><path d="M1 10l8-8.500L17 10" fill="none" stroke="#fff" stroke-width="1.400"/></svg>
<svg class="abs" style="left:1152px;top:14px" width="22" height="22" viewBox="0 0 22 22"><defs><radialGradient id="yg" cx="40%" cy="35%" r="70%"><stop offset="0" stop-color="#fff860"/><stop offset=".7" stop-color="#e8d800"/><stop offset="1" stop-color="#58a820"/></radialGradient></defs><circle cx="11" cy="11" r="10.500" fill="url(#yg)"/><path d="M11 5.500v10M6 10.500h10" stroke="#1e8a1e" stroke-width="2.600"/></svg>
<svg class="abs" style="left:1182px;top:15px" width="22" height="22" viewBox="0 0 22 22"><g fill="none" stroke="#fff" stroke-width="1.300"><rect x="4.500" y="2.500" width="16" height="12"/><path d="M12.500 14.500v4M8 19h9"/><rect x="1.500" y="4.500" width="3" height="4" fill="#05080d"/><path d="M3 8.500v8"/></g></svg>
<svg class="abs" style="left:1211px;top:15px" width="24" height="20" viewBox="0 0 24 20"><path d="M1.500 7h3.500l4.500-4.500v15L5 13H1.500z" fill="none" stroke="#fff" stroke-width="1.300"/><path d="M12 7.500a3 3 0 0 1 0 5" fill="none" stroke="#fff" stroke-width="1.200"/><path d="M14.500 5a6 6 0 0 1 0 10" fill="none" stroke="#aaa" stroke-width="1.200"/><path d="M17 2.500a9 9 0 0 1 0 15" fill="none" stroke="#666" stroke-width="1.200"/></svg>
<svg class="abs" style="left:1242px;top:14px" width="22" height="24" viewBox="0 0 22 24"><path d="M1.500 1.500h19v15h-7l-3 4-3-4h-6z" fill="none" stroke="#fff" stroke-width="1.400"/><path d="M5 6h12M5 9.500h12M5 13h8" stroke="#fff" stroke-width="1.200"/></svg>
<div class="t" style="left:1274px;top:16px;font-size:17px;color:#fff;font-weight:400">中</div>
<div class="abs" style="left:1308px;top:15px;width:19px;height:19px;background:#fff;color:#05080d;font-size:19px;line-height:19px;text-align:center">M</div>
<div class="t" style="left:1368px;top:6px;font-size:15.500px;letter-spacing:-.3px;color:#fff">15:44</div>
<div class="t" style="left:1345px;top:26px;font-size:16.500px;color:#fff">2015/12/10</div>
<div class="abs" style="left:1434px;top:4px;width:1px;height:46px;background:#4a4d52"></div>
</div>
</body></html>
